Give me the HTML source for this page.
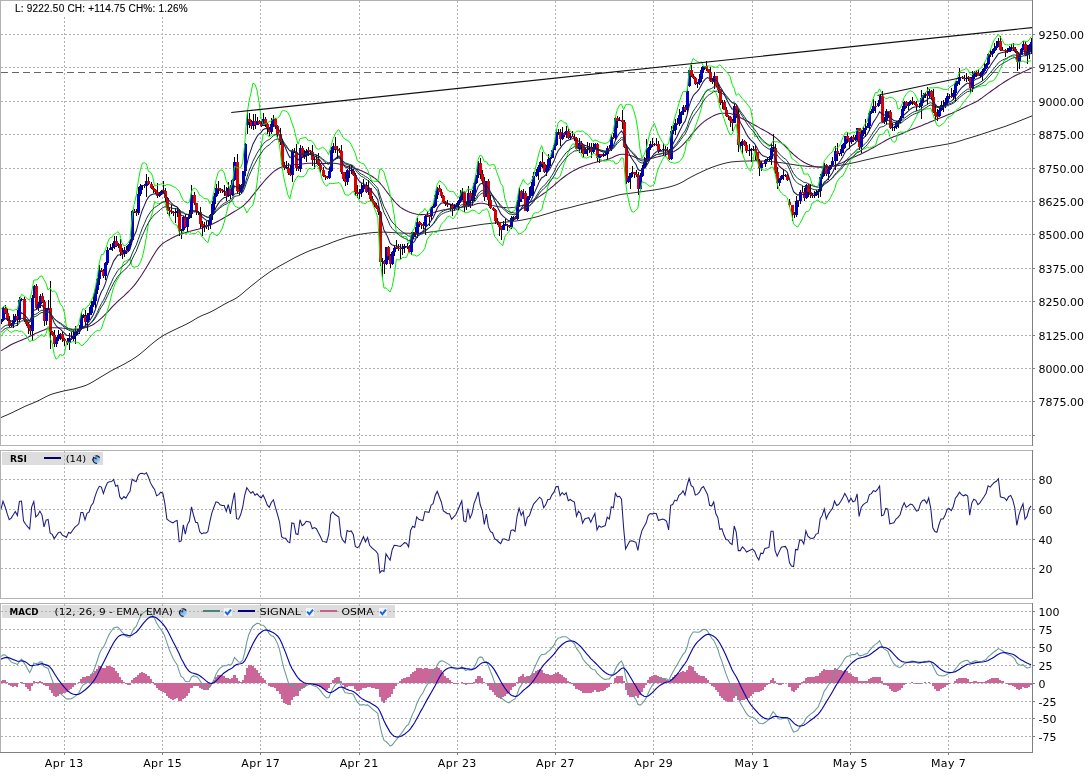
<!DOCTYPE html>
<html><head><meta charset="utf-8"><title>Chart</title>
<style>
html,body{margin:0;padding:0;background:#fff;}
.w{stroke:#000;stroke-width:1;fill:none}.u{fill:#0000cc}.d{fill:#dd0000}
body{width:1092px;height:777px;position:relative;overflow:hidden;font-family:"Liberation Sans",Arial,sans-serif;}
.top{position:absolute;left:9px;top:3px;height:13px;line-height:13px;padding:0 5px;background:#fff;font-size:10px;letter-spacing:0.26px;will-change:transform;color:#000;white-space:nowrap;}
.leg{will-change:transform;position:absolute;left:2px;height:13px;background:#ddd;font-family:"DejaVu Sans",Verdana,sans-serif;font-size:10px;line-height:13px;color:#000;white-space:nowrap;}
.leg span{position:absolute;top:0;}
.leg b{position:absolute;top:0;font-weight:bold;}
.leg i{position:absolute;display:block;height:2px;top:5px;}
.ico{position:absolute;top:2px;width:9px;height:9px;border-radius:50%;background:radial-gradient(circle at 35% 35%,#cfe4f7 0,#6fa3d0 45%,#2d5f8f 100%);}
.chk{position:absolute;top:2px;width:9px;height:9px;background:#eef3f8;}
.chk svg{position:absolute;left:0;top:0}
</style></head><body>
<svg width="1092" height="777" viewBox="0 0 1092 777" style="position:absolute;left:0;top:0;will-change:transform">
<defs><clipPath id="c1"><rect x="1" y="1" width="1031" height="444"/></clipPath><clipPath id="c2"><rect x="1" y="451" width="1031" height="147"/></clipPath><clipPath id="c3"><rect x="1" y="604" width="1031" height="148"/></clipPath></defs>
<rect x="2" y="452" width="101" height="13" fill="#dddddd"/><rect x="2" y="605" width="393" height="13" fill="#dddddd"/>
<path d="M1 34.5H1032 M1 67.5H1032 M1 101.5H1032 M1 134.5H1032 M1 168.5H1032 M1 201.5H1032 M1 234.5H1032 M1 268.5H1032 M1 301.5H1032 M1 335.5H1032 M1 368.5H1032 M1 401.5H1032 M1 435.5H1032 M64.5 1V445 M162.5 1V445 M260.5 1V445 M359.5 1V445 M457.5 1V445 M555.5 1V445 M653.5 1V445 M752.5 1V445 M850.5 1V445 M948.5 1V445 M1 479.5H1032 M1 509.5H1032 M1 539.5H1032 M1 568.5H1032 M64.5 451V598 M162.5 451V598 M260.5 451V598 M359.5 451V598 M457.5 451V598 M555.5 451V598 M653.5 451V598 M752.5 451V598 M850.5 451V598 M948.5 451V598 M1 611.5H1032 M1 629.5H1032 M1 647.5H1032 M1 665.5H1032 M1 683.5H1032 M1 701.5H1032 M1 718.5H1032 M1 736.5H1032 M64.5 604V752 M162.5 604V752 M260.5 604V752 M359.5 604V752 M457.5 604V752 M555.5 604V752 M653.5 604V752 M752.5 604V752 M850.5 604V752 M948.5 604V752" stroke="#b2b2b2" stroke-width="1" stroke-dasharray="2 2" fill="none" shape-rendering="crispEdges"/>
<path d="M1 72.5H1032" stroke="#666" stroke-width="1" stroke-dasharray="7 4" fill="none" shape-rendering="crispEdges"/>
<g clip-path="url(#c1)">
<g shape-rendering="crispEdges"><path class="w" d="M1.5 319V324"/><path class="u" d="M0 320h3V322h-3z"/><path class="w" d="M3.5 307V321"/><path class="u" d="M2 308h3V320h-3z"/><path class="w" d="M5.5 305V314"/><path class="d" d="M4 308h3V313h-3z"/><path class="w" d="M7.5 309V321"/><path class="d" d="M6 313h3V320h-3z"/><path class="w" d="M9.5 316V327"/><path class="d" d="M8 320h3V326h-3z"/><path class="w" d="M11.5 323V327"/><path class="u" d="M10 324h3V326h-3z"/><path class="w" d="M13.5 314V328"/><path class="u" d="M12 320h3V324h-3z"/><path class="w" d="M15.5 314V322"/><path class="u" d="M14 316h3V320h-3z"/><path class="w" d="M17.5 310V326"/><path class="d" d="M16 316h3V320h-3z"/><path class="w" d="M19.5 297V322"/><path class="u" d="M18 300h3V320h-3z"/><path class="w" d="M21.5 298V301"/><path class="u" d="M20 299h3V300h-3z"/><path class="w" d="M24.5 297V322"/><path class="d" d="M23 299h3V320h-3z"/><path class="w" d="M26.5 319V326"/><path class="d" d="M25 320h3V324h-3z"/><path class="w" d="M28.5 322V334"/><path class="d" d="M27 324h3V328h-3z"/><path class="w" d="M30.5 325V335"/><path class="d" d="M29 328h3V331h-3z"/><path class="w" d="M32.5 295V341"/><path class="u" d="M31 298h3V331h-3z"/><path class="w" d="M34.5 285V298"/><path class="u" d="M33 286h3V298h-3z"/><path class="w" d="M36.5 284V309"/><path class="d" d="M35 286h3V308h-3z"/><path class="w" d="M38.5 302V311"/><path class="u" d="M37 304h3V308h-3z"/><path class="w" d="M40.5 294V308"/><path class="u" d="M39 296h3V304h-3z"/><path class="w" d="M42.5 293V303"/><path class="d" d="M41 296h3V302h-3z"/><path class="w" d="M44.5 300V326"/><path class="d" d="M43 302h3V321h-3z"/><path class="w" d="M46.5 308V325"/><path class="u" d="M45 309h3V321h-3z"/><path class="w" d="M48.5 300V310"/><path class="u" d="M47 308h3V309h-3z"/><path class="w" d="M50.5 281V349"/><path class="d" d="M49 308h3V332h-3z"/><path class="w" d="M52.5 331V336"/><path class="d" d="M51 332h3V335h-3z"/><path class="w" d="M54.5 330V347"/><path class="d" d="M53 335h3V344h-3z"/><path class="w" d="M56.5 337V347"/><path class="u" d="M55 339h3V344h-3z"/><path class="w" d="M58.5 330V341"/><path class="u" d="M57 335h3V339h-3z"/><path class="w" d="M60.5 333V340"/><path class="u" d="M59 334h3V335h-3z"/><path class="w" d="M62.5 332V342"/><path class="d" d="M61 334h3V339h-3z"/><path class="w" d="M64.5 338V346"/><path class="d" d="M63 339h3V341h-3z"/><path class="w" d="M67.5 338V345"/><path class="d" d="M66 341h3V343h-3z"/><path class="w" d="M69.5 333V350"/><path class="u" d="M68 338h3V343h-3z"/><path class="w" d="M71.5 332V340"/><path class="d" d="M70 338h3V339h-3z"/><path class="w" d="M73.5 330V341"/><path class="u" d="M72 336h3V339h-3z"/><path class="w" d="M75.5 326V344"/><path class="u" d="M74 332h3V336h-3z"/><path class="w" d="M77.5 329V335"/><path class="u" d="M76 331h3V332h-3z"/><path class="w" d="M79.5 325V334"/><path class="u" d="M78 329h3V331h-3z"/><path class="w" d="M81.5 312V330"/><path class="u" d="M80 316h3V329h-3z"/><path class="w" d="M83.5 314V318"/><path class="u" d="M82 315h3V316h-3z"/><path class="w" d="M85.5 310V325"/><path class="d" d="M84 316h3V322h-3z"/><path class="w" d="M87.5 313V331"/><path class="u" d="M86 315h3V322h-3z"/><path class="w" d="M89.5 307V320"/><path class="u" d="M88 313h3V315h-3z"/><path class="w" d="M91.5 301V315"/><path class="u" d="M90 305h3V313h-3z"/><path class="w" d="M93.5 294V307"/><path class="u" d="M92 301h3V305h-3z"/><path class="w" d="M95.5 287V308"/><path class="u" d="M94 290h3V301h-3z"/><path class="w" d="M97.5 278V294"/><path class="u" d="M96 279h3V290h-3z"/><path class="w" d="M99.5 265V285"/><path class="u" d="M98 270h3V279h-3z"/><path class="w" d="M101.5 268V272"/><path class="d" d="M100 270h3V271h-3z"/><path class="w" d="M103.5 269V278"/><path class="d" d="M102 271h3V276h-3z"/><path class="w" d="M105.5 262V280"/><path class="u" d="M104 263h3V276h-3z"/><path class="w" d="M107.5 247V265"/><path class="u" d="M106 250h3V263h-3z"/><path class="w" d="M110.5 244V250"/><path class="u" d="M109 248h3V250h-3z"/><path class="w" d="M112.5 243V251"/><path class="u" d="M111 247h3V248h-3z"/><path class="w" d="M114.5 236V249"/><path class="u" d="M113 241h3V247h-3z"/><path class="w" d="M116.5 236V247"/><path class="d" d="M115 241h3V246h-3z"/><path class="w" d="M118.5 243V248"/><path class="u" d="M117 244h3V246h-3z"/><path class="w" d="M120.5 239V256"/><path class="d" d="M119 244h3V252h-3z"/><path class="w" d="M122.5 248V259"/><path class="d" d="M121 252h3V254h-3z"/><path class="w" d="M124.5 247V257"/><path class="u" d="M123 250h3V254h-3z"/><path class="w" d="M126.5 246V254"/><path class="d" d="M125 250h3V251h-3z"/><path class="w" d="M128.5 244V252"/><path class="u" d="M127 245h3V251h-3z"/><path class="w" d="M130.5 239V247"/><path class="u" d="M129 240h3V245h-3z"/><path class="w" d="M132.5 210V241"/><path class="u" d="M131 211h3V240h-3z"/><path class="w" d="M134.5 209V213"/><path class="d" d="M133 211h3V212h-3z"/><path class="w" d="M136.5 209V216"/><path class="d" d="M135 212h3V213h-3z"/><path class="w" d="M138.5 187V215"/><path class="u" d="M137 194h3V213h-3z"/><path class="w" d="M140.5 184V196"/><path class="u" d="M139 186h3V194h-3z"/><path class="w" d="M142.5 185V190"/><path class="u" d="M141 185h3V186h-3z"/><path class="w" d="M144.5 184V188"/><path class="d" d="M143 185h3V186h-3z"/><path class="w" d="M146.5 174V197"/><path class="u" d="M145 181h3V186h-3z"/><path class="w" d="M148.5 177V185"/><path class="d" d="M147 181h3V184h-3z"/><path class="w" d="M151.5 182V189"/><path class="d" d="M150 184h3V188h-3z"/><path class="w" d="M153.5 186V193"/><path class="d" d="M152 188h3V190h-3z"/><path class="w" d="M155.5 189V194"/><path class="d" d="M154 190h3V192h-3z"/><path class="w" d="M157.5 183V198"/><path class="d" d="M156 192h3V196h-3z"/><path class="w" d="M159.5 192V197"/><path class="u" d="M158 194h3V196h-3z"/><path class="w" d="M161.5 190V195"/><path class="u" d="M160 191h3V194h-3z"/><path class="w" d="M163.5 181V193"/><path class="d" d="M162 190h3V191h-3z"/><path class="w" d="M165.5 188V202"/><path class="d" d="M164 191h3V198h-3z"/><path class="w" d="M167.5 197V214"/><path class="d" d="M166 198h3V210h-3z"/><path class="w" d="M169.5 207V217"/><path class="d" d="M168 210h3V211h-3z"/><path class="w" d="M171.5 205V214"/><path class="d" d="M170 211h3V212h-3z"/><path class="w" d="M173.5 211V216"/><path class="d" d="M172 212h3V213h-3z"/><path class="w" d="M175.5 208V223"/><path class="u" d="M174 212h3V213h-3z"/><path class="w" d="M177.5 207V217"/><path class="u" d="M176 211h3V212h-3z"/><path class="w" d="M179.5 209V236"/><path class="d" d="M178 211h3V231h-3z"/><path class="w" d="M181.5 229V239"/><path class="u" d="M180 230h3V231h-3z"/><path class="w" d="M183.5 216V231"/><path class="u" d="M182 217h3V230h-3z"/><path class="w" d="M185.5 214V228"/><path class="d" d="M184 217h3V227h-3z"/><path class="w" d="M187.5 217V232"/><path class="u" d="M186 218h3V227h-3z"/><path class="w" d="M189.5 210V219"/><path class="u" d="M188 214h3V218h-3z"/><path class="w" d="M191.5 185V218"/><path class="u" d="M190 195h3V214h-3z"/><path class="w" d="M194.5 192V205"/><path class="d" d="M193 195h3V203h-3z"/><path class="w" d="M196.5 203V215"/><path class="d" d="M195 203h3V212h-3z"/><path class="w" d="M198.5 211V215"/><path class="d" d="M197 212h3V213h-3z"/><path class="w" d="M200.5 207V229"/><path class="d" d="M199 212h3V224h-3z"/><path class="w" d="M202.5 221V236"/><path class="d" d="M201 224h3V227h-3z"/><path class="w" d="M204.5 222V232"/><path class="u" d="M203 226h3V227h-3z"/><path class="w" d="M206.5 221V229"/><path class="d" d="M205 225h3V226h-3z"/><path class="w" d="M208.5 220V230"/><path class="u" d="M207 225h3V226h-3z"/><path class="w" d="M210.5 214V229"/><path class="u" d="M209 215h3V225h-3z"/><path class="w" d="M212.5 201V220"/><path class="u" d="M211 204h3V215h-3z"/><path class="w" d="M214.5 193V210"/><path class="u" d="M213 196h3V204h-3z"/><path class="w" d="M216.5 184V197"/><path class="u" d="M215 188h3V196h-3z"/><path class="w" d="M218.5 181V194"/><path class="d" d="M217 188h3V189h-3z"/><path class="w" d="M220.5 188V193"/><path class="d" d="M219 189h3V191h-3z"/><path class="w" d="M222.5 189V193"/><path class="d" d="M221 190h3V191h-3z"/><path class="w" d="M224.5 185V196"/><path class="u" d="M223 191h3V192h-3z"/><path class="w" d="M226.5 187V201"/><path class="d" d="M225 191h3V196h-3z"/><path class="w" d="M228.5 182V197"/><path class="u" d="M227 188h3V196h-3z"/><path class="w" d="M230.5 185V199"/><path class="d" d="M229 188h3V195h-3z"/><path class="w" d="M232.5 179V196"/><path class="u" d="M231 180h3V195h-3z"/><path class="w" d="M234.5 157V181"/><path class="u" d="M233 162h3V180h-3z"/><path class="w" d="M237.5 154V193"/><path class="d" d="M236 162h3V191h-3z"/><path class="w" d="M239.5 184V195"/><path class="d" d="M238 191h3V192h-3z"/><path class="w" d="M241.5 184V194"/><path class="u" d="M240 185h3V192h-3z"/><path class="w" d="M243.5 171V188"/><path class="u" d="M242 171h3V185h-3z"/><path class="w" d="M245.5 143V176"/><path class="u" d="M244 144h3V171h-3z"/><path class="w" d="M247.5 110V134"/><path class="u" d="M246 119h3V125h-3z"/><path class="w" d="M249.5 113V128"/><path class="d" d="M248 119h3V122h-3z"/><path class="w" d="M251.5 120V129"/><path class="d" d="M250 122h3V126h-3z"/><path class="w" d="M253.5 114V130"/><path class="u" d="M252 121h3V126h-3z"/><path class="w" d="M255.5 114V129"/><path class="d" d="M254 121h3V125h-3z"/><path class="w" d="M257.5 117V125"/><path class="u" d="M256 121h3V125h-3z"/><path class="w" d="M259.5 120V124"/><path class="d" d="M258 121h3V124h-3z"/><path class="w" d="M261.5 121V127"/><path class="d" d="M260 124h3V126h-3z"/><path class="w" d="M263.5 113V126"/><path class="u" d="M262 119h3V126h-3z"/><path class="w" d="M265.5 117V127"/><path class="d" d="M264 119h3V124h-3z"/><path class="w" d="M267.5 123V134"/><path class="d" d="M266 124h3V129h-3z"/><path class="w" d="M269.5 127V136"/><path class="d" d="M268 129h3V132h-3z"/><path class="w" d="M271.5 118V134"/><path class="u" d="M270 124h3V132h-3z"/><path class="w" d="M273.5 115V127"/><path class="u" d="M272 119h3V124h-3z"/><path class="w" d="M275.5 118V129"/><path class="d" d="M274 119h3V126h-3z"/><path class="w" d="M277.5 125V138"/><path class="d" d="M276 126h3V134h-3z"/><path class="w" d="M280.5 128V145"/><path class="d" d="M279 134h3V142h-3z"/><path class="w" d="M282.5 139V167"/><path class="d" d="M281 142h3V165h-3z"/><path class="w" d="M284.5 162V170"/><path class="d" d="M283 165h3V168h-3z"/><path class="w" d="M286.5 161V169"/><path class="u" d="M285 167h3V168h-3z"/><path class="w" d="M288.5 163V175"/><path class="d" d="M287 168h3V173h-3z"/><path class="w" d="M290.5 165V176"/><path class="d" d="M289 173h3V175h-3z"/><path class="w" d="M292.5 149V182"/><path class="u" d="M291 151h3V175h-3z"/><path class="w" d="M294.5 148V153"/><path class="d" d="M293 151h3V152h-3z"/><path class="w" d="M296.5 144V171"/><path class="d" d="M295 152h3V168h-3z"/><path class="w" d="M298.5 166V171"/><path class="d" d="M297 168h3V169h-3z"/><path class="w" d="M300.5 145V172"/><path class="u" d="M299 148h3V169h-3z"/><path class="w" d="M302.5 146V158"/><path class="d" d="M301 148h3V157h-3z"/><path class="w" d="M304.5 150V159"/><path class="u" d="M303 155h3V157h-3z"/><path class="w" d="M306.5 149V162"/><path class="u" d="M305 151h3V155h-3z"/><path class="w" d="M308.5 147V156"/><path class="d" d="M307 150h3V151h-3z"/><path class="w" d="M310.5 150V154"/><path class="d" d="M309 151h3V152h-3z"/><path class="w" d="M312.5 145V166"/><path class="d" d="M311 152h3V160h-3z"/><path class="w" d="M314.5 157V169"/><path class="u" d="M313 159h3V160h-3z"/><path class="w" d="M316.5 155V163"/><path class="d" d="M315 159h3V160h-3z"/><path class="w" d="M318.5 153V166"/><path class="d" d="M317 160h3V165h-3z"/><path class="w" d="M320.5 163V173"/><path class="d" d="M319 165h3V170h-3z"/><path class="w" d="M323.5 167V177"/><path class="d" d="M322 170h3V176h-3z"/><path class="w" d="M325.5 175V180"/><path class="d" d="M324 176h3V177h-3z"/><path class="w" d="M327.5 176V179"/><path class="d" d="M326 177h3V178h-3z"/><path class="w" d="M329.5 167V179"/><path class="u" d="M328 171h3V178h-3z"/><path class="w" d="M331.5 147V172"/><path class="u" d="M330 150h3V171h-3z"/><path class="w" d="M333.5 143V153"/><path class="u" d="M332 146h3V150h-3z"/><path class="w" d="M335.5 137V153"/><path class="d" d="M334 146h3V149h-3z"/><path class="w" d="M337.5 146V159"/><path class="d" d="M336 149h3V150h-3z"/><path class="w" d="M339.5 148V153"/><path class="d" d="M338 150h3V151h-3z"/><path class="w" d="M341.5 145V174"/><path class="d" d="M340 151h3V172h-3z"/><path class="w" d="M343.5 172V181"/><path class="d" d="M342 172h3V179h-3z"/><path class="w" d="M345.5 172V186"/><path class="d" d="M344 179h3V182h-3z"/><path class="w" d="M347.5 169V185"/><path class="u" d="M346 170h3V182h-3z"/><path class="w" d="M349.5 165V178"/><path class="d" d="M348 170h3V171h-3z"/><path class="w" d="M351.5 165V174"/><path class="u" d="M350 170h3V171h-3z"/><path class="w" d="M353.5 169V176"/><path class="d" d="M352 171h3V175h-3z"/><path class="w" d="M355.5 173V196"/><path class="d" d="M354 175h3V192h-3z"/><path class="w" d="M357.5 185V198"/><path class="d" d="M356 192h3V194h-3z"/><path class="w" d="M359.5 189V199"/><path class="u" d="M358 193h3V194h-3z"/><path class="w" d="M361.5 183V197"/><path class="u" d="M360 189h3V193h-3z"/><path class="w" d="M363.5 179V192"/><path class="u" d="M362 185h3V189h-3z"/><path class="w" d="M366.5 182V193"/><path class="d" d="M365 185h3V192h-3z"/><path class="w" d="M368.5 180V195"/><path class="u" d="M367 188h3V192h-3z"/><path class="w" d="M370.5 188V201"/><path class="d" d="M369 188h3V199h-3z"/><path class="w" d="M372.5 196V203"/><path class="d" d="M371 199h3V202h-3z"/><path class="w" d="M374.5 201V207"/><path class="d" d="M373 202h3V205h-3z"/><path class="w" d="M376.5 203V209"/><path class="d" d="M375 205h3V208h-3z"/><path class="w" d="M378.5 206V215"/><path class="d" d="M377 208h3V212h-3z"/><path class="w" d="M380.5 211V266"/><path class="d" d="M379 212h3V262h-3z"/><path class="w" d="M382.5 258V278"/><path class="u" d="M381 261h3V262h-3z"/><path class="w" d="M384.5 260V274"/><path class="d" d="M383 261h3V264h-3z"/><path class="w" d="M386.5 247V265"/><path class="u" d="M385 247h3V264h-3z"/><path class="w" d="M388.5 246V260"/><path class="d" d="M387 247h3V256h-3z"/><path class="w" d="M390.5 254V268"/><path class="d" d="M389 256h3V264h-3z"/><path class="w" d="M392.5 251V265"/><path class="u" d="M391 252h3V264h-3z"/><path class="w" d="M394.5 246V256"/><path class="u" d="M393 248h3V252h-3z"/><path class="w" d="M396.5 240V249"/><path class="d" d="M395 247h3V248h-3z"/><path class="w" d="M398.5 244V251"/><path class="d" d="M397 248h3V249h-3z"/><path class="w" d="M400.5 244V259"/><path class="d" d="M399 248h3V249h-3z"/><path class="w" d="M402.5 244V255"/><path class="u" d="M401 248h3V249h-3z"/><path class="w" d="M404.5 244V253"/><path class="u" d="M403 246h3V248h-3z"/><path class="w" d="M407.5 243V249"/><path class="d" d="M406 246h3V247h-3z"/><path class="w" d="M409.5 245V253"/><path class="d" d="M408 247h3V252h-3z"/><path class="w" d="M411.5 232V255"/><path class="u" d="M410 237h3V252h-3z"/><path class="w" d="M413.5 232V239"/><path class="u" d="M412 232h3V237h-3z"/><path class="w" d="M415.5 227V237"/><path class="d" d="M414 232h3V234h-3z"/><path class="w" d="M417.5 218V238"/><path class="u" d="M416 222h3V234h-3z"/><path class="w" d="M419.5 221V227"/><path class="d" d="M418 222h3V224h-3z"/><path class="w" d="M421.5 223V229"/><path class="d" d="M420 224h3V225h-3z"/><path class="w" d="M423.5 222V229"/><path class="d" d="M422 225h3V226h-3z"/><path class="w" d="M425.5 215V235"/><path class="u" d="M424 216h3V226h-3z"/><path class="w" d="M427.5 211V217"/><path class="d" d="M426 215h3V216h-3z"/><path class="w" d="M429.5 215V226"/><path class="d" d="M428 216h3V217h-3z"/><path class="w" d="M431.5 207V220"/><path class="u" d="M430 208h3V216h-3z"/><path class="w" d="M433.5 203V208"/><path class="u" d="M432 206h3V208h-3z"/><path class="w" d="M435.5 191V207"/><path class="u" d="M434 195h3V206h-3z"/><path class="w" d="M437.5 187V199"/><path class="u" d="M436 188h3V195h-3z"/><path class="w" d="M439.5 185V192"/><path class="d" d="M438 188h3V192h-3z"/><path class="w" d="M441.5 189V198"/><path class="d" d="M440 192h3V196h-3z"/><path class="w" d="M443.5 195V203"/><path class="d" d="M442 196h3V202h-3z"/><path class="w" d="M445.5 201V206"/><path class="d" d="M444 202h3V204h-3z"/><path class="w" d="M447.5 200V207"/><path class="d" d="M446 204h3V205h-3z"/><path class="w" d="M450.5 204V211"/><path class="u" d="M449 204h3V205h-3z"/><path class="w" d="M452.5 203V216"/><path class="d" d="M451 205h3V209h-3z"/><path class="w" d="M454.5 204V211"/><path class="u" d="M453 207h3V209h-3z"/><path class="w" d="M456.5 203V207"/><path class="u" d="M455 205h3V207h-3z"/><path class="w" d="M458.5 200V210"/><path class="u" d="M457 201h3V205h-3z"/><path class="w" d="M460.5 190V203"/><path class="u" d="M459 197h3V201h-3z"/><path class="w" d="M462.5 188V200"/><path class="u" d="M461 192h3V197h-3z"/><path class="w" d="M464.5 191V212"/><path class="d" d="M463 192h3V206h-3z"/><path class="w" d="M466.5 202V210"/><path class="d" d="M465 205h3V206h-3z"/><path class="w" d="M468.5 186V207"/><path class="u" d="M467 193h3V206h-3z"/><path class="w" d="M470.5 191V208"/><path class="d" d="M469 193h3V201h-3z"/><path class="w" d="M472.5 190V205"/><path class="u" d="M471 196h3V201h-3z"/><path class="w" d="M474.5 181V201"/><path class="u" d="M473 183h3V196h-3z"/><path class="w" d="M476.5 175V184"/><path class="u" d="M475 175h3V183h-3z"/><path class="w" d="M478.5 161V178"/><path class="u" d="M477 163h3V175h-3z"/><path class="w" d="M480.5 158V179"/><path class="d" d="M479 163h3V174h-3z"/><path class="w" d="M482.5 170V183"/><path class="d" d="M481 174h3V181h-3z"/><path class="w" d="M484.5 177V201"/><path class="d" d="M483 181h3V197h-3z"/><path class="w" d="M486.5 181V197"/><path class="u" d="M485 181h3V197h-3z"/><path class="w" d="M488.5 179V206"/><path class="d" d="M487 181h3V200h-3z"/><path class="w" d="M490.5 195V209"/><path class="d" d="M489 200h3V208h-3z"/><path class="w" d="M493.5 207V211"/><path class="d" d="M492 208h3V210h-3z"/><path class="w" d="M495.5 209V224"/><path class="d" d="M494 210h3V221h-3z"/><path class="w" d="M497.5 218V225"/><path class="d" d="M496 221h3V223h-3z"/><path class="w" d="M499.5 223V236"/><path class="d" d="M498 223h3V227h-3z"/><path class="w" d="M501.5 226V240"/><path class="d" d="M500 227h3V230h-3z"/><path class="w" d="M503.5 221V230"/><path class="u" d="M502 225h3V230h-3z"/><path class="w" d="M505.5 219V226"/><path class="u" d="M504 224h3V226h-3z"/><path class="w" d="M507.5 224V231"/><path class="d" d="M506 225h3V226h-3z"/><path class="w" d="M509.5 225V228"/><path class="d" d="M508 226h3V227h-3z"/><path class="w" d="M511.5 216V229"/><path class="u" d="M510 218h3V227h-3z"/><path class="w" d="M513.5 216V221"/><path class="u" d="M512 217h3V218h-3z"/><path class="w" d="M515.5 216V219"/><path class="d" d="M514 217h3V219h-3z"/><path class="w" d="M517.5 200V220"/><path class="u" d="M516 202h3V219h-3z"/><path class="w" d="M519.5 188V207"/><path class="u" d="M518 191h3V202h-3z"/><path class="w" d="M521.5 190V202"/><path class="d" d="M520 191h3V199h-3z"/><path class="w" d="M523.5 189V199"/><path class="u" d="M522 193h3V199h-3z"/><path class="w" d="M525.5 191V211"/><path class="d" d="M524 193h3V211h-3z"/><path class="w" d="M527.5 196V212"/><path class="u" d="M526 198h3V211h-3z"/><path class="w" d="M529.5 187V200"/><path class="u" d="M528 196h3V198h-3z"/><path class="w" d="M531.5 182V196"/><path class="u" d="M530 186h3V196h-3z"/><path class="w" d="M533.5 172V195"/><path class="u" d="M532 176h3V186h-3z"/><path class="w" d="M536.5 169V177"/><path class="u" d="M535 172h3V176h-3z"/><path class="w" d="M538.5 165V180"/><path class="u" d="M537 167h3V172h-3z"/><path class="w" d="M540.5 161V172"/><path class="u" d="M539 162h3V167h-3z"/><path class="w" d="M542.5 152V168"/><path class="d" d="M541 162h3V164h-3z"/><path class="w" d="M544.5 162V173"/><path class="d" d="M543 164h3V172h-3z"/><path class="w" d="M546.5 165V176"/><path class="u" d="M545 168h3V172h-3z"/><path class="w" d="M548.5 154V171"/><path class="u" d="M547 159h3V168h-3z"/><path class="w" d="M550.5 157V166"/><path class="u" d="M549 158h3V159h-3z"/><path class="w" d="M552.5 149V158"/><path class="u" d="M551 150h3V158h-3z"/><path class="w" d="M554.5 141V150"/><path class="u" d="M553 145h3V150h-3z"/><path class="w" d="M556.5 129V146"/><path class="u" d="M555 132h3V145h-3z"/><path class="w" d="M558.5 129V135"/><path class="u" d="M557 132h3V133h-3z"/><path class="w" d="M560.5 129V146"/><path class="d" d="M559 132h3V139h-3z"/><path class="w" d="M562.5 127V140"/><path class="u" d="M561 133h3V139h-3z"/><path class="w" d="M564.5 132V137"/><path class="d" d="M563 133h3V135h-3z"/><path class="w" d="M566.5 126V138"/><path class="u" d="M565 131h3V135h-3z"/><path class="w" d="M568.5 129V139"/><path class="d" d="M567 131h3V138h-3z"/><path class="w" d="M570.5 133V140"/><path class="u" d="M569 136h3V138h-3z"/><path class="w" d="M572.5 131V137"/><path class="d" d="M571 136h3V137h-3z"/><path class="w" d="M574.5 134V141"/><path class="d" d="M573 137h3V138h-3z"/><path class="w" d="M576.5 137V150"/><path class="d" d="M575 138h3V149h-3z"/><path class="w" d="M579.5 138V153"/><path class="u" d="M578 143h3V149h-3z"/><path class="w" d="M581.5 141V153"/><path class="d" d="M580 143h3V145h-3z"/><path class="w" d="M583.5 145V157"/><path class="d" d="M582 145h3V154h-3z"/><path class="w" d="M585.5 147V154"/><path class="u" d="M584 149h3V154h-3z"/><path class="w" d="M587.5 142V156"/><path class="u" d="M586 149h3V150h-3z"/><path class="w" d="M589.5 143V153"/><path class="u" d="M588 148h3V149h-3z"/><path class="w" d="M591.5 143V158"/><path class="d" d="M590 148h3V152h-3z"/><path class="w" d="M593.5 143V154"/><path class="u" d="M592 148h3V152h-3z"/><path class="w" d="M595.5 143V149"/><path class="u" d="M594 144h3V148h-3z"/><path class="w" d="M597.5 143V162"/><path class="d" d="M596 144h3V158h-3z"/><path class="w" d="M599.5 154V163"/><path class="u" d="M598 154h3V158h-3z"/><path class="w" d="M601.5 154V157"/><path class="d" d="M600 154h3V156h-3z"/><path class="w" d="M603.5 153V157"/><path class="u" d="M602 155h3V156h-3z"/><path class="w" d="M605.5 151V156"/><path class="u" d="M604 154h3V155h-3z"/><path class="w" d="M607.5 146V160"/><path class="u" d="M606 148h3V154h-3z"/><path class="w" d="M609.5 145V149"/><path class="d" d="M608 148h3V149h-3z"/><path class="w" d="M611.5 135V151"/><path class="u" d="M610 137h3V149h-3z"/><path class="w" d="M613.5 133V139"/><path class="d" d="M612 137h3V138h-3z"/><path class="w" d="M615.5 117V140"/><path class="u" d="M614 118h3V138h-3z"/><path class="w" d="M617.5 116V128"/><path class="d" d="M616 118h3V121h-3z"/><path class="w" d="M619.5 117V121"/><path class="u" d="M618 120h3V121h-3z"/><path class="w" d="M622.5 110V129"/><path class="d" d="M621 120h3V122h-3z"/><path class="w" d="M624.5 120V148"/><path class="d" d="M623 122h3V147h-3z"/><path class="w" d="M626.5 146V184"/><path class="d" d="M625 147h3V182h-3z"/><path class="w" d="M628.5 176V183"/><path class="u" d="M627 178h3V182h-3z"/><path class="w" d="M630.5 173V189"/><path class="u" d="M629 173h3V178h-3z"/><path class="w" d="M632.5 166V177"/><path class="u" d="M631 172h3V173h-3z"/><path class="w" d="M634.5 172V178"/><path class="d" d="M633 172h3V174h-3z"/><path class="w" d="M636.5 170V177"/><path class="d" d="M635 174h3V175h-3z"/><path class="w" d="M638.5 172V195"/><path class="d" d="M637 175h3V189h-3z"/><path class="w" d="M640.5 173V191"/><path class="u" d="M639 176h3V189h-3z"/><path class="w" d="M642.5 165V177"/><path class="u" d="M641 168h3V176h-3z"/><path class="w" d="M644.5 157V168"/><path class="u" d="M643 162h3V168h-3z"/><path class="w" d="M646.5 139V165"/><path class="u" d="M645 158h3V162h-3z"/><path class="w" d="M648.5 147V161"/><path class="u" d="M647 148h3V158h-3z"/><path class="w" d="M650.5 141V150"/><path class="u" d="M649 144h3V148h-3z"/><path class="w" d="M652.5 138V147"/><path class="d" d="M651 144h3V145h-3z"/><path class="w" d="M654.5 143V146"/><path class="u" d="M653 144h3V145h-3z"/><path class="w" d="M656.5 138V146"/><path class="d" d="M655 144h3V145h-3z"/><path class="w" d="M658.5 141V153"/><path class="d" d="M657 144h3V151h-3z"/><path class="w" d="M660.5 149V151"/><path class="u" d="M659 150h3V151h-3z"/><path class="w" d="M663.5 143V155"/><path class="u" d="M662 149h3V150h-3z"/><path class="w" d="M665.5 146V156"/><path class="d" d="M664 149h3V150h-3z"/><path class="w" d="M667.5 147V152"/><path class="d" d="M666 150h3V151h-3z"/><path class="w" d="M669.5 149V160"/><path class="d" d="M668 151h3V159h-3z"/><path class="w" d="M671.5 126V160"/><path class="u" d="M670 131h3V159h-3z"/><path class="w" d="M673.5 125V134"/><path class="u" d="M672 130h3V131h-3z"/><path class="w" d="M675.5 119V135"/><path class="u" d="M674 123h3V130h-3z"/><path class="w" d="M677.5 118V125"/><path class="d" d="M676 123h3V124h-3z"/><path class="w" d="M679.5 109V126"/><path class="u" d="M678 115h3V124h-3z"/><path class="w" d="M681.5 111V123"/><path class="u" d="M680 112h3V115h-3z"/><path class="w" d="M683.5 105V115"/><path class="u" d="M682 107h3V112h-3z"/><path class="w" d="M685.5 105V112"/><path class="d" d="M684 107h3V110h-3z"/><path class="w" d="M687.5 87V114"/><path class="u" d="M686 91h3V110h-3z"/><path class="w" d="M689.5 69V87"/><path class="u" d="M688 70h3V86h-3z"/><path class="w" d="M691.5 65V77"/><path class="d" d="M690 70h3V76h-3z"/><path class="w" d="M693.5 74V79"/><path class="d" d="M692 76h3V78h-3z"/><path class="w" d="M695.5 77V85"/><path class="d" d="M694 78h3V84h-3z"/><path class="w" d="M697.5 82V88"/><path class="u" d="M696 83h3V84h-3z"/><path class="w" d="M699.5 74V85"/><path class="u" d="M698 79h3V83h-3z"/><path class="w" d="M701.5 67V82"/><path class="u" d="M700 70h3V79h-3z"/><path class="w" d="M703.5 66V73"/><path class="u" d="M702 66h3V70h-3z"/><path class="w" d="M706.5 61V71"/><path class="d" d="M705 66h3V69h-3z"/><path class="w" d="M708.5 69V73"/><path class="d" d="M707 69h3V72h-3z"/><path class="w" d="M710.5 67V82"/><path class="d" d="M709 72h3V81h-3z"/><path class="w" d="M712.5 78V84"/><path class="d" d="M711 81h3V82h-3z"/><path class="w" d="M714.5 72V89"/><path class="u" d="M713 76h3V82h-3z"/><path class="w" d="M716.5 76V87"/><path class="d" d="M715 76h3V86h-3z"/><path class="w" d="M718.5 84V93"/><path class="d" d="M717 86h3V90h-3z"/><path class="w" d="M720.5 89V105"/><path class="d" d="M719 90h3V103h-3z"/><path class="w" d="M722.5 100V109"/><path class="u" d="M721 102h3V103h-3z"/><path class="w" d="M724.5 100V110"/><path class="d" d="M723 102h3V110h-3z"/><path class="w" d="M726.5 107V117"/><path class="d" d="M725 110h3V116h-3z"/><path class="w" d="M728.5 115V120"/><path class="d" d="M727 116h3V117h-3z"/><path class="w" d="M730.5 116V127"/><path class="d" d="M729 117h3V121h-3z"/><path class="w" d="M732.5 119V131"/><path class="d" d="M731 121h3V123h-3z"/><path class="w" d="M734.5 104V123"/><path class="u" d="M733 106h3V123h-3z"/><path class="w" d="M736.5 105V118"/><path class="d" d="M735 106h3V114h-3z"/><path class="w" d="M738.5 109V152"/><path class="d" d="M737 114h3V145h-3z"/><path class="w" d="M740.5 142V149"/><path class="u" d="M739 144h3V146h-3z"/><path class="w" d="M742.5 139V154"/><path class="u" d="M741 141h3V145h-3z"/><path class="w" d="M744.5 140V146"/><path class="d" d="M743 141h3V145h-3z"/><path class="w" d="M746.5 142V153"/><path class="d" d="M745 145h3V151h-3z"/><path class="w" d="M749.5 144V156"/><path class="u" d="M748 150h3V151h-3z"/><path class="w" d="M751.5 148V162"/><path class="u" d="M750 149h3V150h-3z"/><path class="w" d="M753.5 146V151"/><path class="u" d="M752 149h3V150h-3z"/><path class="w" d="M755.5 145V160"/><path class="d" d="M754 149h3V152h-3z"/><path class="w" d="M757.5 152V162"/><path class="d" d="M756 152h3V161h-3z"/><path class="w" d="M759.5 159V176"/><path class="d" d="M758 161h3V168h-3z"/><path class="w" d="M761.5 161V171"/><path class="u" d="M760 163h3V168h-3z"/><path class="w" d="M763.5 163V164"/><path class="d" d="M762 163h3V164h-3z"/><path class="w" d="M765.5 159V167"/><path class="u" d="M764 160h3V164h-3z"/><path class="w" d="M767.5 157V161"/><path class="u" d="M766 159h3V160h-3z"/><path class="w" d="M769.5 156V161"/><path class="u" d="M768 159h3V160h-3z"/><path class="w" d="M771.5 143V165"/><path class="u" d="M770 148h3V159h-3z"/><path class="w" d="M773.5 134V152"/><path class="u" d="M772 147h3V148h-3z"/><path class="w" d="M775.5 144V174"/><path class="d" d="M774 148h3V172h-3z"/><path class="w" d="M777.5 167V189"/><path class="d" d="M776 172h3V183h-3z"/><path class="w" d="M779.5 178V186"/><path class="u" d="M778 179h3V183h-3z"/><path class="w" d="M781.5 175V180"/><path class="u" d="M780 176h3V179h-3z"/><path class="w" d="M783.5 169V180"/><path class="u" d="M782 175h3V176h-3z"/><path class="w" d="M785.5 174V177"/><path class="u" d="M784 175h3V176h-3z"/><path class="w" d="M787.5 174V181"/><path class="d" d="M786 175h3V180h-3z"/><path class="w" d="M789.5 199V207"/><path class="d" d="M788 202h3V205h-3z"/><path class="w" d="M792.5 205V221"/><path class="d" d="M791 205h3V214h-3z"/><path class="w" d="M794.5 212V218"/><path class="d" d="M793 214h3V215h-3z"/><path class="w" d="M796.5 196V217"/><path class="u" d="M795 201h3V215h-3z"/><path class="w" d="M798.5 200V207"/><path class="d" d="M797 200h3V201h-3z"/><path class="w" d="M800.5 190V204"/><path class="u" d="M799 192h3V201h-3z"/><path class="w" d="M802.5 186V193"/><path class="d" d="M801 192h3V193h-3z"/><path class="w" d="M804.5 188V201"/><path class="d" d="M803 192h3V198h-3z"/><path class="w" d="M806.5 184V199"/><path class="u" d="M805 185h3V198h-3z"/><path class="w" d="M808.5 184V197"/><path class="d" d="M807 185h3V192h-3z"/><path class="w" d="M810.5 184V198"/><path class="d" d="M809 192h3V195h-3z"/><path class="w" d="M812.5 193V198"/><path class="d" d="M811 195h3V196h-3z"/><path class="w" d="M814.5 191V198"/><path class="u" d="M813 195h3V196h-3z"/><path class="w" d="M816.5 190V196"/><path class="u" d="M815 192h3V195h-3z"/><path class="w" d="M818.5 189V198"/><path class="u" d="M817 191h3V192h-3z"/><path class="w" d="M820.5 174V197"/><path class="u" d="M819 177h3V191h-3z"/><path class="w" d="M822.5 170V179"/><path class="u" d="M821 173h3V177h-3z"/><path class="w" d="M824.5 163V176"/><path class="u" d="M823 165h3V173h-3z"/><path class="w" d="M826.5 164V176"/><path class="d" d="M825 165h3V174h-3z"/><path class="w" d="M828.5 167V180"/><path class="u" d="M827 169h3V174h-3z"/><path class="w" d="M830.5 165V170"/><path class="u" d="M829 165h3V169h-3z"/><path class="w" d="M832.5 157V166"/><path class="u" d="M831 161h3V165h-3z"/><path class="w" d="M835.5 146V170"/><path class="u" d="M834 151h3V161h-3z"/><path class="w" d="M837.5 143V161"/><path class="d" d="M836 151h3V154h-3z"/><path class="w" d="M839.5 153V156"/><path class="u" d="M838 153h3V154h-3z"/><path class="w" d="M841.5 145V156"/><path class="u" d="M840 149h3V153h-3z"/><path class="w" d="M843.5 143V153"/><path class="u" d="M842 144h3V149h-3z"/><path class="w" d="M845.5 136V148"/><path class="u" d="M844 136h3V144h-3z"/><path class="w" d="M847.5 132V143"/><path class="d" d="M846 136h3V139h-3z"/><path class="w" d="M849.5 138V149"/><path class="d" d="M848 139h3V142h-3z"/><path class="w" d="M851.5 136V144"/><path class="u" d="M850 137h3V142h-3z"/><path class="w" d="M853.5 135V142"/><path class="d" d="M852 137h3V140h-3z"/><path class="w" d="M855.5 135V141"/><path class="u" d="M854 138h3V140h-3z"/><path class="w" d="M857.5 128V141"/><path class="u" d="M856 128h3V138h-3z"/><path class="w" d="M859.5 128V150"/><path class="d" d="M858 128h3V147h-3z"/><path class="w" d="M861.5 130V153"/><path class="u" d="M860 134h3V147h-3z"/><path class="w" d="M863.5 127V136"/><path class="u" d="M862 130h3V134h-3z"/><path class="w" d="M865.5 119V137"/><path class="u" d="M864 128h3V130h-3z"/><path class="w" d="M867.5 123V128"/><path class="u" d="M866 126h3V128h-3z"/><path class="w" d="M869.5 111V131"/><path class="u" d="M868 113h3V126h-3z"/><path class="w" d="M871.5 109V114"/><path class="u" d="M870 111h3V113h-3z"/><path class="w" d="M873.5 99V113"/><path class="u" d="M872 106h3V111h-3z"/><path class="w" d="M875.5 101V113"/><path class="d" d="M874 106h3V107h-3z"/><path class="w" d="M878.5 100V107"/><path class="u" d="M877 103h3V106h-3z"/><path class="w" d="M880.5 94V104"/><path class="u" d="M879 96h3V103h-3z"/><path class="w" d="M882.5 91V123"/><path class="d" d="M881 96h3V122h-3z"/><path class="w" d="M884.5 117V124"/><path class="u" d="M883 121h3V122h-3z"/><path class="w" d="M886.5 109V124"/><path class="u" d="M885 111h3V121h-3z"/><path class="w" d="M888.5 111V118"/><path class="d" d="M887 111h3V112h-3z"/><path class="w" d="M890.5 110V129"/><path class="d" d="M889 112h3V128h-3z"/><path class="w" d="M892.5 123V131"/><path class="u" d="M891 127h3V128h-3z"/><path class="w" d="M894.5 126V131"/><path class="u" d="M893 127h3V128h-3z"/><path class="w" d="M896.5 121V129"/><path class="u" d="M895 123h3V127h-3z"/><path class="w" d="M898.5 120V128"/><path class="u" d="M897 121h3V123h-3z"/><path class="w" d="M900.5 116V123"/><path class="u" d="M899 118h3V121h-3z"/><path class="w" d="M902.5 106V118"/><path class="u" d="M901 109h3V118h-3z"/><path class="w" d="M904.5 101V111"/><path class="u" d="M903 102h3V109h-3z"/><path class="w" d="M906.5 101V108"/><path class="d" d="M905 102h3V106h-3z"/><path class="w" d="M908.5 102V110"/><path class="u" d="M907 104h3V106h-3z"/><path class="w" d="M910.5 100V105"/><path class="u" d="M909 101h3V104h-3z"/><path class="w" d="M912.5 97V105"/><path class="d" d="M911 101h3V102h-3z"/><path class="w" d="M914.5 101V105"/><path class="d" d="M913 102h3V104h-3z"/><path class="w" d="M916.5 101V111"/><path class="d" d="M915 104h3V106h-3z"/><path class="w" d="M919.5 103V108"/><path class="u" d="M918 106h3V107h-3z"/><path class="w" d="M921.5 90V119"/><path class="u" d="M920 98h3V106h-3z"/><path class="w" d="M923.5 93V103"/><path class="u" d="M922 95h3V98h-3z"/><path class="w" d="M925.5 92V98"/><path class="u" d="M924 94h3V95h-3z"/><path class="w" d="M927.5 87V105"/><path class="d" d="M926 94h3V96h-3z"/><path class="w" d="M929.5 89V98"/><path class="u" d="M928 91h3V96h-3z"/><path class="w" d="M931.5 90V100"/><path class="d" d="M930 91h3V97h-3z"/><path class="w" d="M933.5 89V113"/><path class="d" d="M932 97h3V112h-3z"/><path class="w" d="M935.5 106V119"/><path class="d" d="M934 112h3V116h-3z"/><path class="w" d="M937.5 109V121"/><path class="d" d="M936 116h3V117h-3z"/><path class="w" d="M939.5 108V117"/><path class="u" d="M938 110h3V116h-3z"/><path class="w" d="M941.5 101V111"/><path class="u" d="M940 105h3V110h-3z"/><path class="w" d="M943.5 100V112"/><path class="u" d="M942 105h3V106h-3z"/><path class="w" d="M945.5 98V108"/><path class="u" d="M944 102h3V105h-3z"/><path class="w" d="M947.5 93V105"/><path class="u" d="M946 96h3V102h-3z"/><path class="w" d="M949.5 94V99"/><path class="u" d="M948 96h3V97h-3z"/><path class="w" d="M951.5 88V98"/><path class="d" d="M950 96h3V97h-3z"/><path class="w" d="M953.5 90V100"/><path class="u" d="M952 93h3V97h-3z"/><path class="w" d="M955.5 81V102"/><path class="u" d="M954 84h3V93h-3z"/><path class="w" d="M957.5 81V86"/><path class="u" d="M956 81h3V84h-3z"/><path class="w" d="M959.5 68V85"/><path class="u" d="M958 77h3V81h-3z"/><path class="w" d="M962.5 76V79"/><path class="d" d="M961 77h3V78h-3z"/><path class="w" d="M964.5 75V81"/><path class="d" d="M963 78h3V79h-3z"/><path class="w" d="M966.5 73V82"/><path class="u" d="M965 78h3V79h-3z"/><path class="w" d="M968.5 76V81"/><path class="d" d="M967 77h3V78h-3z"/><path class="w" d="M970.5 77V93"/><path class="d" d="M969 78h3V88h-3z"/><path class="w" d="M972.5 71V92"/><path class="u" d="M971 77h3V88h-3z"/><path class="w" d="M974.5 71V79"/><path class="u" d="M973 73h3V77h-3z"/><path class="w" d="M976.5 71V77"/><path class="d" d="M975 72h3V73h-3z"/><path class="w" d="M978.5 70V76"/><path class="d" d="M977 73h3V76h-3z"/><path class="w" d="M980.5 72V78"/><path class="u" d="M979 74h3V76h-3z"/><path class="w" d="M982.5 69V81"/><path class="u" d="M981 71h3V74h-3z"/><path class="w" d="M984.5 63V72"/><path class="u" d="M983 68h3V71h-3z"/><path class="w" d="M986.5 63V69"/><path class="u" d="M985 64h3V68h-3z"/><path class="w" d="M988.5 53V65"/><path class="u" d="M987 54h3V64h-3z"/><path class="w" d="M990.5 50V57"/><path class="d" d="M989 54h3V55h-3z"/><path class="w" d="M992.5 49V57"/><path class="u" d="M991 51h3V54h-3z"/><path class="w" d="M994.5 43V53"/><path class="u" d="M993 48h3V51h-3z"/><path class="w" d="M996.5 41V50"/><path class="u" d="M995 46h3V48h-3z"/><path class="w" d="M998.5 38V47"/><path class="u" d="M997 41h3V46h-3z"/><path class="w" d="M1000.5 36V51"/><path class="d" d="M999 41h3V50h-3z"/><path class="w" d="M1002.5 47V51"/><path class="d" d="M1001 50h3V51h-3z"/><path class="w" d="M1005.5 49V57"/><path class="d" d="M1004 50h3V51h-3z"/><path class="w" d="M1007.5 48V53"/><path class="d" d="M1006 51h3V52h-3z"/><path class="w" d="M1009.5 46V52"/><path class="u" d="M1008 48h3V52h-3z"/><path class="w" d="M1011.5 44V51"/><path class="u" d="M1010 47h3V48h-3z"/><path class="w" d="M1013.5 43V51"/><path class="d" d="M1012 47h3V49h-3z"/><path class="w" d="M1015.5 47V53"/><path class="d" d="M1014 49h3V52h-3z"/><path class="w" d="M1017.5 51V71"/><path class="d" d="M1016 52h3V62h-3z"/><path class="w" d="M1019.5 54V69"/><path class="u" d="M1018 55h3V62h-3z"/><path class="w" d="M1021.5 48V55"/><path class="u" d="M1020 49h3V55h-3z"/><path class="w" d="M1023.5 41V50"/><path class="u" d="M1022 44h3V49h-3z"/><path class="w" d="M1025.5 42V56"/><path class="d" d="M1024 44h3V55h-3z"/><path class="w" d="M1027.5 45V64"/><path class="u" d="M1026 52h3V55h-3z"/><path class="w" d="M1029.5 44V59"/><path class="u" d="M1028 45h3V52h-3z"/><path class="w" d="M1031.5 38V54"/><path class="u" d="M1030 42h3V45h-3z"/></g>
<polyline points="0.0,418.0 2.0,417.1 4.0,416.2 6.0,415.4 8.0,414.5 10.0,413.6 12.0,412.7 14.0,411.7 16.0,410.7 18.0,409.8 20.0,408.8 22.0,407.8 24.0,406.8 26.0,405.9 28.0,405.1 30.0,404.2 32.0,403.5 34.0,402.6 36.0,401.8 38.0,400.8 40.0,399.9 42.0,398.8 44.0,397.7 46.0,396.7 48.0,395.7 50.0,394.8 52.0,394.1 54.0,393.5 56.0,392.9 58.0,392.4 60.0,391.9 62.0,391.4 64.0,390.9 66.0,390.5 68.0,390.1 70.0,389.7 72.0,389.3 74.0,388.9 76.0,388.4 78.0,387.8 80.0,387.2 82.0,386.7 84.0,386.0 86.0,385.3 88.0,384.4 90.0,383.4 92.0,382.3 94.0,381.1 96.0,379.9 98.0,378.7 100.0,377.5 102.0,376.3 104.0,375.1 106.0,373.9 108.0,372.7 110.0,371.5 112.0,370.4 114.0,369.3 116.0,368.3 118.0,367.2 120.0,366.3 122.0,365.2 124.0,364.2 126.0,363.1 128.0,361.9 130.0,360.8 132.0,359.6 134.0,358.3 136.0,357.0 138.0,355.6 140.0,354.0 142.0,352.4 144.0,350.7 146.0,349.0 148.0,347.2 150.0,345.5 152.0,343.8 154.0,342.2 156.0,340.6 158.0,339.1 160.0,337.7 162.0,336.4 164.0,335.1 166.0,334.0 168.0,333.0 170.0,332.0 172.0,331.0 174.0,330.0 176.0,329.1 178.0,328.1 180.0,327.2 182.0,326.3 184.0,325.3 186.0,324.4 188.0,323.3 190.0,322.2 192.0,321.1 194.0,319.9 196.0,318.6 198.0,317.5 200.0,316.5 202.0,315.5 204.0,314.7 206.0,313.9 208.0,313.1 210.0,312.2 212.0,311.2 214.0,310.2 216.0,309.1 218.0,307.9 220.0,306.8 222.0,305.6 224.0,304.4 226.0,303.4 228.0,302.3 230.0,301.3 232.0,300.4 234.0,299.4 236.0,298.2 238.0,296.9 240.0,295.4 242.0,293.8 244.0,292.1 246.0,290.3 248.0,288.7 250.0,287.0 252.0,285.4 254.0,283.8 256.0,282.2 258.0,280.6 260.0,279.1 262.0,277.6 264.0,276.1 266.0,274.7 268.0,273.2 270.0,271.8 272.0,270.5 274.0,269.3 276.0,268.1 278.0,266.9 280.0,265.8 282.0,264.7 284.0,263.6 286.0,262.5 288.0,261.4 290.0,260.3 292.0,259.2 294.0,258.1 296.0,257.1 298.0,256.1 300.0,255.1 302.0,254.2 304.0,253.3 306.0,252.3 308.0,251.5 310.0,250.6 312.0,249.9 314.0,249.1 316.0,248.5 318.0,247.8 320.0,247.1 322.0,246.4 324.0,245.6 326.0,244.8 328.0,244.1 330.0,243.3 332.0,242.5 334.0,241.7 336.0,241.0 338.0,240.2 340.0,239.6 342.0,238.9 344.0,238.2 346.0,237.6 348.0,237.0 350.0,236.5 352.0,236.0 354.0,235.6 356.0,235.1 358.0,234.7 360.0,234.3 362.0,234.0 364.0,233.7 366.0,233.4 368.0,233.1 370.0,232.9 372.0,232.7 374.0,232.5 376.0,232.4 378.0,232.3 380.0,232.2 382.0,232.1 384.0,232.1 386.0,232.2 388.0,232.3 390.0,232.4 392.0,232.6 394.0,232.7 396.0,232.8 398.0,233.0 400.0,233.0 402.0,233.1 404.0,233.1 406.0,233.2 408.0,233.2 410.0,233.3 412.0,233.3 414.0,233.4 416.0,233.5 418.0,233.5 420.0,233.4 422.0,233.2 424.0,233.0 426.0,232.7 428.0,232.4 430.0,232.1 432.0,231.8 434.0,231.5 436.0,231.3 438.0,231.0 440.0,230.7 442.0,230.4 444.0,230.1 446.0,229.9 448.0,229.6 450.0,229.3 452.0,229.0 454.0,228.7 456.0,228.4 458.0,228.2 460.0,227.8 462.0,227.5 464.0,227.2 466.0,226.9 468.0,226.6 470.0,226.3 472.0,225.9 474.0,225.6 476.0,225.3 478.0,225.0 480.0,224.7 482.0,224.4 484.0,224.1 486.0,223.9 488.0,223.7 490.0,223.5 492.0,223.3 494.0,223.1 496.0,222.9 498.0,222.8 500.0,222.6 502.0,222.4 504.0,222.3 506.0,222.1 508.0,221.9 510.0,221.7 512.0,221.5 514.0,221.2 516.0,221.0 518.0,220.7 520.0,220.4 522.0,220.1 524.0,219.7 526.0,219.3 528.0,218.9 530.0,218.5 532.0,218.0 534.0,217.5 536.0,217.0 538.0,216.5 540.0,215.9 542.0,215.3 544.0,214.7 546.0,214.1 548.0,213.5 550.0,212.9 552.0,212.3 554.0,211.6 556.0,211.0 558.0,210.5 560.0,209.9 562.0,209.4 564.0,208.9 566.0,208.5 568.0,208.0 570.0,207.5 572.0,207.0 574.0,206.5 576.0,205.9 578.0,205.4 580.0,204.9 582.0,204.4 584.0,203.9 586.0,203.4 588.0,202.9 590.0,202.5 592.0,202.0 594.0,201.5 596.0,201.0 598.0,200.5 600.0,200.0 602.0,199.4 604.0,198.9 606.0,198.4 608.0,197.8 610.0,197.3 612.0,196.7 614.0,196.2 616.0,195.6 618.0,195.1 620.0,194.7 622.0,194.3 624.0,194.0 626.0,193.8 628.0,193.5 630.0,193.3 632.0,193.0 634.0,192.8 636.0,192.5 638.0,192.2 640.0,191.9 642.0,191.7 644.0,191.4 646.0,191.1 648.0,190.8 650.0,190.6 652.0,190.3 654.0,190.0 656.0,189.7 658.0,189.3 660.0,189.0 662.0,188.6 664.0,188.2 666.0,187.8 668.0,187.3 670.0,186.8 672.0,186.2 674.0,185.6 676.0,184.9 678.0,184.1 680.0,183.2 682.0,182.2 684.0,181.1 686.0,179.9 688.0,178.7 690.0,177.6 692.0,176.5 694.0,175.5 696.0,174.5 698.0,173.5 700.0,172.6 702.0,171.6 704.0,170.7 706.0,169.8 708.0,168.9 710.0,168.1 712.0,167.3 714.0,166.6 716.0,165.9 718.0,165.2 720.0,164.6 722.0,164.0 724.0,163.5 726.0,163.0 728.0,162.6 730.0,162.2 732.0,161.9 734.0,161.7 736.0,161.6 738.0,161.4 740.0,161.3 742.0,161.2 744.0,161.1 746.0,161.1 748.0,161.0 750.0,160.9 752.0,160.9 754.0,160.8 756.0,160.8 758.0,160.9 760.0,161.0 762.0,161.0 764.0,161.1 766.0,161.2 768.0,161.4 770.0,161.5 772.0,161.7 774.0,161.9 776.0,162.1 778.0,162.3 780.0,162.6 782.0,162.8 784.0,163.1 786.0,163.5 788.0,163.8 790.0,164.1 792.0,164.4 794.0,164.7 796.0,165.0 798.0,165.3 800.0,165.6 802.0,165.8 804.0,166.0 806.0,166.2 808.0,166.4 810.0,166.6 812.0,166.7 814.0,166.8 816.0,166.9 818.0,166.9 820.0,166.9 822.0,166.9 824.0,166.9 826.0,166.8 828.0,166.7 830.0,166.6 832.0,166.4 834.0,166.2 836.0,165.9 838.0,165.6 840.0,165.3 842.0,165.0 844.0,164.7 846.0,164.3 848.0,163.9 850.0,163.5 852.0,163.1 854.0,162.7 856.0,162.2 858.0,161.8 860.0,161.3 862.0,160.8 864.0,160.3 866.0,159.9 868.0,159.4 870.0,159.0 872.0,158.5 874.0,158.1 876.0,157.6 878.0,157.2 880.0,156.8 882.0,156.4 884.0,155.9 886.0,155.6 888.0,155.2 890.0,154.8 892.0,154.4 894.0,154.0 896.0,153.6 898.0,153.1 900.0,152.8 902.0,152.4 904.0,151.9 906.0,151.6 908.0,151.2 910.0,150.8 912.0,150.4 914.0,150.0 916.0,149.6 918.0,149.2 920.0,148.8 922.0,148.4 924.0,148.1 926.0,147.7 928.0,147.4 930.0,147.0 932.0,146.7 934.0,146.4 936.0,146.0 938.0,145.7 940.0,145.4 942.0,145.0 944.0,144.7 946.0,144.3 948.0,144.0 950.0,143.5 952.0,143.1 954.0,142.6 956.0,142.1 958.0,141.5 960.0,140.9 962.0,140.3 964.0,139.6 966.0,139.0 968.0,138.4 970.0,137.8 972.0,137.2 974.0,136.6 976.0,136.0 978.0,135.4 980.0,134.7 982.0,134.1 984.0,133.4 986.0,132.7 988.0,132.1 990.0,131.4 992.0,130.7 994.0,130.1 996.0,129.4 998.0,128.8 1000.0,128.1 1002.0,127.4 1004.0,126.8 1006.0,126.1 1008.0,125.3 1010.0,124.6 1012.0,123.8 1014.0,123.0 1016.0,122.3 1018.0,121.5 1020.0,120.7 1022.0,119.9 1024.0,119.1 1026.0,118.3 1028.0,117.5 1030.0,116.7 1032.0,115.9" fill="none" stroke="#2a2a2a" stroke-width="1.0" />
<polyline points="0.0,351.2 2.0,350.1 4.0,348.9 6.0,347.7 8.0,346.5 10.0,345.3 12.0,344.2 14.0,343.3 16.0,342.4 18.0,341.6 20.0,340.8 22.0,339.9 24.0,339.1 26.0,338.2 28.0,337.2 30.0,336.3 32.0,335.2 34.0,334.3 36.0,333.3 38.0,332.4 40.0,331.5 42.0,330.7 44.0,329.9 46.0,329.1 48.0,328.5 50.0,328.0 52.0,327.8 54.0,327.7 56.0,327.7 58.0,327.8 60.0,327.9 62.0,328.1 64.0,328.2 66.0,328.4 68.0,328.7 70.0,328.9 72.0,329.1 74.0,329.2 76.0,329.1 78.0,329.0 80.0,328.7 82.0,328.4 84.0,328.0 86.0,327.5 88.0,326.9 90.0,326.1 92.0,325.2 94.0,324.0 96.0,322.6 98.0,321.1 100.0,319.4 102.0,317.6 104.0,315.7 106.0,313.7 108.0,311.6 110.0,309.4 112.0,307.2 114.0,305.1 116.0,303.1 118.0,301.2 120.0,299.4 122.0,297.6 124.0,295.8 126.0,293.9 128.0,292.0 130.0,290.0 132.0,287.9 134.0,285.6 136.0,283.1 138.0,280.4 140.0,277.5 142.0,274.5 144.0,271.3 146.0,268.1 148.0,264.7 150.0,261.3 152.0,257.8 154.0,254.5 156.0,251.2 158.0,248.4 160.0,246.1 162.0,244.2 164.0,242.6 166.0,241.4 168.0,240.2 170.0,239.1 172.0,238.0 174.0,237.0 176.0,236.1 178.0,235.3 180.0,234.5 182.0,233.7 184.0,233.0 186.0,232.4 188.0,231.8 190.0,231.3 192.0,230.8 194.0,230.3 196.0,229.8 198.0,229.3 200.0,228.7 202.0,228.1 204.0,227.4 206.0,226.8 208.0,226.1 210.0,225.2 212.0,224.3 214.0,223.3 216.0,222.3 218.0,221.2 220.0,220.1 222.0,219.0 224.0,217.8 226.0,216.6 228.0,215.5 230.0,214.3 232.0,213.0 234.0,211.8 236.0,210.6 238.0,209.4 240.0,208.1 242.0,206.8 244.0,205.1 246.0,203.2 248.0,201.1 250.0,198.8 252.0,196.2 254.0,193.8 256.0,191.2 258.0,188.8 260.0,186.2 262.0,183.8 264.0,181.5 266.0,179.2 268.0,177.1 270.0,175.0 272.0,173.1 274.0,171.4 276.0,170.0 278.0,168.8 280.0,167.8 282.0,166.9 284.0,166.2 286.0,165.7 288.0,165.3 290.0,165.1 292.0,164.9 294.0,164.8 296.0,164.6 298.0,164.4 300.0,164.2 302.0,164.0 304.0,163.7 306.0,163.5 308.0,163.3 310.0,163.2 312.0,163.2 314.0,163.2 316.0,163.4 318.0,163.5 320.0,163.6 322.0,163.6 324.0,163.6 326.0,163.5 328.0,163.4 330.0,163.3 332.0,163.2 334.0,163.3 336.0,163.5 338.0,163.8 340.0,164.3 342.0,164.8 344.0,165.3 346.0,165.9 348.0,166.4 350.0,167.0 352.0,167.6 354.0,168.2 356.0,168.8 358.0,169.5 360.0,170.2 362.0,171.1 364.0,172.0 366.0,173.0 368.0,174.0 370.0,175.1 372.0,176.3 374.0,177.7 376.0,179.2 378.0,181.1 380.0,183.2 382.0,185.5 384.0,188.0 386.0,190.8 388.0,193.4 390.0,196.0 392.0,198.4 394.0,200.8 396.0,203.0 398.0,205.0 400.0,206.8 402.0,208.3 404.0,209.5 406.0,210.5 408.0,211.4 410.0,212.2 412.0,212.9 414.0,213.5 416.0,214.0 418.0,214.4 420.0,214.6 422.0,214.6 424.0,214.5 426.0,214.3 428.0,213.9 430.0,213.5 432.0,213.0 434.0,212.5 436.0,211.8 438.0,211.2 440.0,210.7 442.0,210.2 444.0,209.8 446.0,209.5 448.0,209.1 450.0,208.8 452.0,208.5 454.0,208.3 456.0,208.0 458.0,207.8 460.0,207.5 462.0,207.3 464.0,207.0 466.0,206.8 468.0,206.4 470.0,205.9 472.0,205.4 474.0,204.8 476.0,204.0 478.0,203.5 480.0,203.2 482.0,203.2 484.0,203.5 486.0,204.0 488.0,204.5 490.0,204.9 492.0,205.4 494.0,205.8 496.0,206.2 498.0,206.6 500.0,206.9 502.0,207.2 504.0,207.4 506.0,207.6 508.0,207.7 510.0,207.7 512.0,207.5 514.0,207.3 516.0,207.0 518.0,206.5 520.0,206.0 522.0,205.4 524.0,204.8 526.0,204.0 528.0,203.2 530.0,202.2 532.0,201.2 534.0,200.0 536.0,198.8 538.0,197.4 540.0,196.1 542.0,194.7 544.0,193.3 546.0,191.8 548.0,190.2 550.0,188.6 552.0,187.0 554.0,185.3 556.0,183.5 558.0,181.8 560.0,180.2 562.0,178.5 564.0,177.0 566.0,175.5 568.0,174.1 570.0,172.8 572.0,171.6 574.0,170.5 576.0,169.5 578.0,168.5 580.0,167.6 582.0,166.8 584.0,166.0 586.0,165.3 588.0,164.6 590.0,163.9 592.0,163.3 594.0,162.8 596.0,162.2 598.0,161.8 600.0,161.3 602.0,160.8 604.0,160.3 606.0,159.8 608.0,159.2 610.0,158.5 612.0,157.7 614.0,156.8 616.0,155.8 618.0,155.0 620.0,154.5 622.0,154.2 624.0,154.2 626.0,154.5 628.0,154.9 630.0,155.4 632.0,156.0 634.0,156.8 636.0,157.7 638.0,158.4 640.0,158.9 642.0,159.1 644.0,159.2 646.0,159.1 648.0,158.8 650.0,158.5 652.0,158.2 654.0,157.8 656.0,157.2 658.0,156.8 660.0,156.3 662.0,155.8 664.0,155.2 666.0,154.8 668.0,154.1 670.0,153.4 672.0,152.5 674.0,151.5 676.0,150.3 678.0,149.0 680.0,147.4 682.0,145.7 684.0,143.7 686.0,141.4 688.0,139.1 690.0,136.6 692.0,134.1 694.0,131.6 696.0,129.3 698.0,127.1 700.0,125.1 702.0,123.3 704.0,121.7 706.0,120.2 708.0,118.9 710.0,117.7 712.0,116.6 714.0,115.5 716.0,114.7 718.0,114.1 720.0,113.6 722.0,113.3 724.0,113.3 726.0,113.3 728.0,113.3 730.0,113.6 732.0,114.1 734.0,114.7 736.0,115.5 738.0,116.5 740.0,117.5 742.0,118.5 744.0,119.5 746.0,120.5 748.0,121.5 750.0,122.5 752.0,123.6 754.0,124.7 756.0,125.8 758.0,126.9 760.0,128.1 762.0,129.2 764.0,130.3 766.0,131.4 768.0,132.5 770.0,133.7 772.0,135.0 774.0,136.4 776.0,137.9 778.0,139.7 780.0,141.5 782.0,143.3 784.0,145.2 786.0,147.2 788.0,149.2 790.0,151.1 792.0,153.0 794.0,154.8 796.0,156.5 798.0,158.1 800.0,159.6 802.0,161.0 804.0,162.2 806.0,163.3 808.0,164.3 810.0,165.1 812.0,165.8 814.0,166.3 816.0,166.7 818.0,167.0 820.0,167.2 822.0,167.3 824.0,167.3 826.0,167.2 828.0,167.0 830.0,166.7 832.0,166.2 834.0,165.7 836.0,165.1 838.0,164.3 840.0,163.5 842.0,162.7 844.0,161.8 846.0,160.8 848.0,159.8 850.0,158.8 852.0,157.9 854.0,157.1 856.0,156.2 858.0,155.3 860.0,154.4 862.0,153.5 864.0,152.5 866.0,151.5 868.0,150.5 870.0,149.4 872.0,148.3 874.0,147.2 876.0,146.1 878.0,144.9 880.0,143.8 882.0,142.6 884.0,141.5 886.0,140.3 888.0,139.2 890.0,138.3 892.0,137.4 894.0,136.6 896.0,135.9 898.0,135.2 900.0,134.4 902.0,133.6 904.0,132.7 906.0,131.8 908.0,130.9 910.0,130.1 912.0,129.3 914.0,128.5 916.0,127.8 918.0,127.0 920.0,126.2 922.0,125.4 924.0,124.5 926.0,123.7 928.0,122.9 930.0,122.0 932.0,121.2 934.0,120.4 936.0,119.6 938.0,118.8 940.0,118.0 942.0,117.2 944.0,116.4 946.0,115.6 948.0,114.8 950.0,114.0 952.0,113.2 954.0,112.3 956.0,111.4 958.0,110.4 960.0,109.5 962.0,108.4 964.0,107.5 966.0,106.5 968.0,105.6 970.0,104.6 972.0,103.7 974.0,102.8 976.0,101.8 978.0,100.6 980.0,99.3 982.0,97.9 984.0,96.4 986.0,94.9 988.0,93.4 990.0,92.0 992.0,90.5 994.0,89.1 996.0,87.7 998.0,86.3 1000.0,84.9 1002.0,83.6 1004.0,82.3 1006.0,81.0 1008.0,79.8 1010.0,78.6 1012.0,77.4 1014.0,76.3 1016.0,75.3 1018.0,74.3 1020.0,73.4 1022.0,72.5 1024.0,71.6 1026.0,70.6 1028.0,69.7 1030.0,68.8 1032.0,67.8" fill="none" stroke="#4a1450" stroke-width="1.05" />
<polyline points="1.0,309.3 3.0,306.9 5.1,305.8 7.1,308.4 9.2,309.5 11.2,309.8 13.3,310.5 15.3,309.4 17.4,309.6 19.4,300.4 21.5,294.3 23.5,295.6 25.6,297.1 27.6,299.0 29.7,300.1 31.7,292.0 33.8,280.1 35.8,280.0 37.9,279.3 39.9,276.3 42.0,275.9 44.0,279.8 46.1,283.4 48.1,290.1 50.2,287.9 52.2,291.7 54.2,290.8 56.3,292.8 58.3,298.5 60.4,304.4 62.4,306.3 64.5,313.1 66.5,327.4 68.6,329.0 70.6,330.1 72.7,330.6 74.7,328.9 76.8,326.7 78.8,324.1 80.9,314.1 82.9,308.7 85.0,309.4 87.0,306.5 89.1,305.2 91.1,300.9 93.2,296.5 95.2,288.1 97.3,277.0 99.3,262.9 101.4,254.5 103.4,254.4 105.4,249.8 107.5,243.0 109.5,238.1 111.6,237.4 113.6,234.5 115.7,233.7 117.7,231.6 119.8,234.2 121.8,242.5 123.9,245.9 125.9,245.2 128.0,243.3 130.0,239.6 132.1,217.0 134.1,204.5 136.2,195.9 138.2,181.8 140.3,170.1 142.3,163.2 144.4,162.8 146.4,163.7 148.5,171.5 150.5,172.1 152.6,176.1 154.6,185.8 156.6,185.5 158.7,184.7 160.7,184.1 162.8,183.7 164.8,185.9 166.9,184.6 168.9,184.7 171.0,185.3 173.0,186.5 175.1,187.4 177.1,189.2 179.2,191.2 181.2,196.1 183.3,200.4 185.3,202.1 187.4,202.8 189.4,202.2 191.5,191.5 193.5,188.1 195.6,188.4 197.6,191.1 199.7,195.4 201.7,196.2 203.8,198.4 205.8,198.7 207.8,199.0 209.9,203.7 211.9,201.1 214.0,191.6 216.0,179.8 218.1,172.7 220.1,170.1 222.2,170.0 224.2,172.9 226.3,180.8 228.3,185.2 230.4,189.0 232.4,183.5 234.5,166.4 236.5,167.3 238.6,168.1 240.6,167.7 242.7,162.6 244.7,144.3 246.8,116.3 248.8,102.5 250.9,93.3 252.9,83.3 255.0,84.3 257.0,90.0 259.0,101.8 261.1,118.4 263.1,124.7 265.2,124.2 267.2,122.9 269.3,121.6 271.3,121.0 273.4,118.2 275.4,118.3 277.5,118.1 279.5,116.5 281.6,111.4 283.6,110.5 285.7,111.1 287.7,112.2 289.8,116.5 291.8,122.5 293.9,128.3 295.9,136.9 298.0,144.3 300.0,138.6 302.1,138.2 304.1,137.7 306.2,137.6 308.2,140.7 310.2,140.2 312.3,141.4 314.3,144.2 316.4,148.5 318.4,149.4 320.5,148.3 322.5,147.3 324.6,148.6 326.6,151.1 328.7,154.7 330.7,147.3 332.8,139.6 334.8,134.7 336.9,131.2 338.9,129.6 341.0,133.8 343.0,137.1 345.1,139.4 347.1,140.2 349.2,141.5 351.2,144.7 353.3,148.9 355.3,153.5 357.4,160.9 359.4,162.3 361.4,163.2 363.5,163.6 365.5,166.6 367.6,169.8 369.6,175.5 371.7,181.0 373.7,181.2 375.8,181.4 377.8,181.6 379.9,168.8 381.9,169.5 384.0,172.4 386.0,179.5 388.1,186.1 390.1,194.2 392.2,203.5 394.2,214.8 396.3,232.3 398.3,233.1 400.4,234.3 402.4,236.8 404.5,236.4 406.5,236.6 408.6,243.8 410.6,237.9 412.6,231.1 414.7,227.5 416.7,218.5 418.8,214.5 420.8,212.3 422.9,211.6 424.9,208.3 427.0,211.6 429.0,211.1 431.1,206.5 433.1,204.3 435.2,194.1 437.2,184.3 439.3,180.8 441.3,182.0 443.4,183.7 445.4,186.3 447.5,190.2 449.5,191.3 451.6,191.6 453.6,191.7 455.7,194.9 457.7,197.3 459.8,196.2 461.8,190.6 463.8,191.4 465.9,192.2 467.9,188.7 470.0,189.9 472.0,189.6 474.1,182.7 476.1,173.0 478.2,159.1 480.2,154.9 482.3,156.5 484.3,161.9 486.4,161.6 488.4,165.0 490.5,165.2 492.5,164.5 494.6,164.9 496.6,171.7 498.7,177.3 500.7,183.3 502.8,186.1 504.8,198.4 506.9,205.1 508.9,210.0 511.0,213.2 513.0,211.3 515.0,210.5 517.1,200.4 519.1,188.1 521.2,184.0 523.2,179.3 525.3,182.8 527.3,184.4 529.4,183.8 531.4,180.7 533.5,176.5 535.5,168.0 537.6,158.7 539.6,150.7 541.7,145.6 543.7,151.8 545.8,154.4 547.8,156.1 549.9,157.2 551.9,151.5 554.0,144.6 556.0,132.0 558.1,123.1 560.1,120.7 562.2,120.6 564.2,122.9 566.2,123.0 568.3,128.0 570.3,131.0 572.4,133.5 574.4,133.3 576.5,131.2 578.5,131.1 580.6,131.5 582.6,130.8 584.7,132.9 586.7,133.8 588.8,135.8 590.8,138.3 592.9,141.5 594.9,140.0 597.0,140.6 599.0,141.9 601.1,142.6 603.1,143.1 605.2,143.6 607.2,142.5 609.3,141.7 611.3,135.1 613.4,131.1 615.4,116.8 617.4,109.3 619.5,105.0 621.5,104.2 623.6,109.6 625.6,104.8 627.7,104.2 629.7,104.5 631.8,105.3 633.8,110.8 635.9,118.3 637.9,130.1 640.0,149.0 642.0,158.2 644.1,154.7 646.1,149.6 648.2,139.9 650.2,131.7 652.3,126.6 654.3,123.3 656.4,129.0 658.4,134.7 660.5,138.7 662.5,142.2 664.6,145.3 666.6,144.9 668.6,143.7 670.7,134.0 672.7,126.5 674.8,117.1 676.8,111.3 678.9,103.3 680.9,97.1 683.0,91.6 685.0,91.6 687.1,91.0 689.1,71.1 691.2,63.1 693.2,58.4 695.3,60.3 697.3,61.4 699.4,62.8 701.4,61.8 703.5,66.5 705.5,66.7 707.6,65.8 709.6,66.0 711.7,66.1 713.7,66.8 715.8,67.4 717.8,66.5 719.8,64.7 721.9,66.8 723.9,68.9 726.0,71.4 728.0,73.5 730.1,76.6 732.1,84.2 734.2,88.6 736.2,95.4 738.3,93.4 740.3,95.9 742.4,98.7 744.4,100.8 746.5,103.3 748.5,105.8 750.6,108.5 752.6,119.8 754.7,136.8 756.7,136.5 758.8,136.1 760.8,139.1 762.9,141.7 764.9,142.9 767.0,144.5 769.0,146.6 771.0,144.0 773.1,140.8 775.1,141.9 777.2,141.7 779.2,142.3 781.3,143.0 783.3,144.0 785.4,145.2 787.4,147.0 789.5,151.2 791.5,158.3 793.6,159.7 795.6,161.0 797.7,163.2 799.7,165.0 801.8,168.1 803.8,174.1 805.9,174.1 807.9,173.8 810.0,177.3 812.0,184.2 814.1,185.4 816.1,186.6 818.2,186.1 820.2,177.5 822.2,170.8 824.3,160.6 826.3,158.4 828.4,155.5 830.4,153.3 832.5,151.9 834.5,146.9 836.6,148.7 838.6,146.7 840.7,143.5 842.7,137.8 844.8,133.3 846.8,131.9 848.9,133.3 850.9,133.0 853.0,131.9 855.0,132.7 857.1,129.7 859.1,131.7 861.2,130.5 863.2,127.3 865.3,123.7 867.3,121.0 869.4,111.6 871.4,105.0 873.4,98.0 875.5,92.4 877.5,93.0 879.6,88.9 881.6,93.1 883.7,96.4 885.7,98.6 887.8,98.2 889.8,97.2 891.9,97.6 893.9,98.6 896.0,101.0 898.0,109.2 900.1,108.3 902.1,103.9 904.2,97.4 906.2,94.2 908.3,92.1 910.3,90.7 912.4,91.6 914.4,93.5 916.5,97.3 918.5,102.0 920.6,100.0 922.6,95.9 924.6,93.1 926.7,91.8 928.7,88.0 930.8,87.8 932.8,87.9 934.9,87.7 936.9,87.6 939.0,87.8 941.0,88.3 943.1,89.3 945.1,89.4 947.2,89.7 949.2,87.7 951.3,86.1 953.3,85.2 955.4,82.0 957.4,77.8 959.5,72.2 961.5,70.3 963.6,69.9 965.6,68.8 967.7,69.2 969.7,73.5 971.8,75.4 973.8,72.7 975.8,70.8 977.9,70.0 979.9,68.7 982.0,66.6 984.0,63.5 986.1,59.5 988.1,54.9 990.2,50.1 992.2,44.7 994.3,39.7 996.3,37.1 998.4,34.5 1000.4,37.2 1002.5,40.6 1004.5,44.4 1006.6,44.8 1008.6,45.0 1010.7,44.3 1012.7,44.0 1014.8,44.2 1016.8,44.3 1018.9,44.5 1020.9,43.6 1023.0,40.9 1025.0,41.4 1027.0,41.8 1029.1,39.9 1031.1,36.6" fill="none" stroke="#00f000" stroke-width="1.0" />
<polyline points="1.0,336.6 3.0,333.1 5.1,331.5 7.1,329.2 9.2,331.2 11.2,332.4 13.3,331.4 15.3,330.6 17.4,330.5 19.4,331.6 21.5,331.1 23.5,332.7 25.6,335.3 27.6,337.9 29.7,341.7 31.7,340.4 33.8,340.4 35.8,339.3 37.9,337.6 39.9,335.8 42.0,334.5 44.0,336.8 46.1,333.4 48.1,326.4 50.2,338.2 52.2,343.2 54.2,354.6 56.3,359.3 58.3,357.2 60.4,353.9 62.4,356.1 64.5,353.3 66.5,342.9 68.6,342.3 70.6,342.4 72.7,341.7 74.7,341.9 76.8,342.2 78.8,342.6 80.9,345.4 82.9,345.2 85.0,342.7 87.0,341.2 89.1,338.2 91.1,335.8 93.2,333.4 95.2,331.8 97.3,330.5 99.3,331.0 101.4,328.9 103.4,322.5 105.4,316.9 107.5,310.4 109.5,303.6 111.6,294.7 113.6,287.7 115.7,282.5 117.7,278.9 119.8,275.2 121.8,266.8 123.9,261.5 125.9,261.2 128.0,259.8 130.0,258.9 132.1,266.3 134.1,267.2 136.2,266.7 138.2,266.0 140.3,262.6 142.3,257.2 144.4,248.0 146.4,237.2 148.5,222.7 150.5,218.3 152.6,212.2 154.6,201.6 156.6,202.9 158.7,203.8 160.7,203.0 162.8,202.4 164.8,202.0 166.9,209.7 168.9,215.3 171.0,219.7 173.0,222.7 175.1,224.7 177.1,225.0 179.2,232.4 181.2,234.8 183.3,231.0 185.3,233.8 187.4,233.0 189.4,231.9 191.5,233.8 193.5,233.5 195.6,233.6 197.6,231.5 199.7,232.2 201.7,236.6 203.8,238.1 205.8,241.0 207.8,242.8 209.9,235.6 211.9,232.1 214.0,233.4 216.0,235.5 218.1,235.0 220.1,232.3 222.2,228.5 224.2,222.3 226.3,213.7 228.3,205.4 230.4,201.5 232.4,200.9 234.5,205.8 236.5,207.0 238.6,208.0 240.6,207.3 242.7,205.8 244.7,207.9 246.8,213.0 248.8,209.8 250.9,206.8 252.9,205.0 255.0,196.4 257.0,183.0 259.0,166.1 261.1,146.2 263.1,134.7 265.2,132.8 267.2,134.5 269.3,137.0 271.3,135.4 273.4,134.5 275.4,134.3 277.5,137.5 279.5,145.0 281.6,163.8 283.6,176.6 285.7,185.6 287.7,194.5 289.8,198.8 291.8,190.3 293.9,182.6 295.9,178.8 298.0,175.8 300.0,176.8 302.1,176.8 304.1,176.4 306.2,173.9 308.2,169.0 310.2,168.3 312.3,169.4 314.3,167.9 316.4,165.2 318.4,167.6 320.5,173.2 322.5,180.5 324.6,184.3 326.6,186.3 328.7,183.7 330.7,183.4 332.8,183.5 334.8,183.3 336.9,183.1 338.9,182.4 341.0,184.8 343.0,189.3 345.1,194.7 347.1,195.1 349.2,195.2 351.2,193.0 353.3,191.2 355.3,195.5 357.4,196.1 359.4,200.6 361.4,202.7 363.5,203.2 365.5,203.6 367.6,201.5 369.6,201.1 371.7,201.2 373.7,206.6 375.8,211.8 377.8,217.8 379.9,255.7 381.9,274.3 384.0,288.2 386.0,287.8 388.1,289.9 390.1,292.1 392.2,286.6 394.2,276.3 396.3,259.6 398.3,259.8 400.4,259.8 402.4,257.6 404.5,257.6 406.5,257.3 408.6,252.1 410.6,253.5 412.6,255.0 414.7,255.0 416.7,256.2 418.8,255.0 420.8,253.3 422.9,251.2 424.9,248.1 427.0,239.9 429.0,236.6 431.1,234.9 433.1,231.3 435.2,232.4 437.2,232.2 439.3,229.2 441.3,224.2 443.4,222.3 445.4,219.9 447.5,216.7 449.5,216.1 451.6,217.9 453.6,218.6 455.7,215.4 457.7,211.4 459.8,209.4 461.8,210.6 463.8,211.8 465.9,212.9 467.9,212.6 470.0,211.6 472.0,210.1 474.1,210.3 476.1,211.5 478.2,213.7 480.2,213.1 482.3,210.1 484.3,210.2 486.4,208.6 488.4,211.1 490.5,219.0 492.5,226.8 494.6,236.4 496.6,238.6 498.7,241.7 500.7,243.9 502.8,245.6 504.8,237.0 506.9,233.7 508.9,231.8 511.0,227.2 513.0,227.8 515.0,228.3 517.1,231.7 519.1,234.0 521.2,233.2 523.2,231.7 525.3,230.2 527.3,225.3 529.4,222.2 531.4,218.6 533.5,213.5 535.5,212.7 537.6,212.8 539.6,211.5 541.7,209.9 543.7,201.6 545.8,195.3 547.8,187.1 549.9,180.7 551.9,178.7 554.0,177.7 556.0,178.8 558.1,178.3 560.1,176.1 562.2,170.1 564.2,163.7 566.2,158.8 568.3,152.4 570.3,147.6 572.4,144.1 574.4,143.8 576.5,150.0 578.5,151.1 580.6,152.3 582.6,157.7 584.7,157.7 586.7,158.1 588.8,157.0 590.8,156.7 592.9,153.5 594.9,153.5 597.0,157.4 599.0,158.3 601.1,159.8 603.1,160.8 605.2,161.2 607.2,160.4 609.3,160.1 611.3,161.1 613.4,160.8 615.4,164.0 617.4,163.6 619.5,161.3 621.5,157.7 623.6,158.6 625.6,182.5 627.7,196.6 629.7,205.5 631.8,211.6 633.8,212.2 635.9,210.2 637.9,208.4 640.0,192.3 642.0,181.8 644.1,182.4 646.1,183.3 648.2,185.4 650.2,186.3 652.3,185.8 654.3,184.1 656.4,174.7 658.4,168.5 660.5,163.8 662.5,159.6 664.6,156.1 666.6,156.8 668.6,161.1 670.7,162.4 672.7,162.6 674.8,163.4 676.8,162.6 678.9,161.9 680.9,160.0 683.0,156.9 685.0,151.2 687.1,139.4 689.1,141.3 691.2,137.3 693.2,132.9 695.3,126.5 697.3,121.3 699.4,114.8 701.4,108.3 703.5,96.1 705.5,91.1 707.6,89.4 709.6,90.7 711.7,92.0 713.7,90.1 715.8,92.7 717.8,97.5 719.8,107.8 721.9,112.2 723.9,118.3 726.0,124.9 728.0,130.3 730.1,134.9 732.1,134.2 734.2,128.7 736.2,123.9 738.3,140.1 740.3,148.9 742.4,153.6 744.4,159.0 746.5,165.1 748.5,169.1 750.6,171.1 752.6,163.4 754.7,150.8 756.7,158.0 758.8,166.8 760.8,168.5 762.9,169.9 764.9,170.3 767.0,170.0 769.0,168.7 771.0,167.2 773.1,167.2 775.1,173.5 777.2,183.8 779.2,189.9 781.3,193.0 783.3,194.9 785.4,196.0 787.4,197.9 789.5,206.7 791.5,213.6 793.6,223.8 795.6,226.0 797.7,227.0 799.7,223.8 801.8,220.0 803.8,215.6 805.9,211.6 807.9,211.8 810.0,209.2 812.0,203.2 814.1,202.5 816.1,200.5 818.2,200.1 820.2,202.2 822.2,202.2 824.3,203.8 826.3,202.9 828.4,201.0 830.4,197.9 832.5,193.6 834.5,189.7 836.6,182.4 838.6,179.4 840.7,176.9 842.7,176.0 844.8,172.2 846.8,168.1 848.9,163.7 850.9,159.3 853.0,157.7 855.0,154.3 857.1,151.2 859.1,151.8 861.2,150.1 863.2,149.2 865.3,148.6 867.3,147.1 869.4,148.2 871.4,147.4 873.4,146.3 875.5,145.5 877.5,138.4 879.6,134.5 881.6,134.4 883.7,133.9 885.7,130.2 887.8,129.6 889.8,136.4 891.9,140.3 893.9,142.6 896.0,140.9 898.0,132.6 900.1,132.2 902.1,132.1 904.2,132.2 906.2,131.8 908.3,130.2 910.3,127.7 912.4,123.9 914.4,120.4 916.5,116.4 918.5,111.3 920.6,109.9 922.6,110.1 924.6,109.5 926.7,108.8 928.7,108.8 930.8,108.4 932.8,113.9 934.9,120.0 936.9,125.2 939.0,126.4 941.0,125.2 943.1,123.5 945.1,121.7 947.2,117.7 949.2,116.5 951.3,116.0 953.3,113.9 955.4,111.0 957.4,109.2 959.5,108.1 961.5,105.3 963.6,102.1 965.6,99.9 967.7,97.0 969.7,94.8 971.8,90.1 973.8,88.7 975.8,87.6 977.9,87.0 979.9,86.4 982.0,85.8 984.0,85.5 986.1,85.2 988.1,82.4 990.2,81.5 992.2,81.0 994.3,79.8 996.3,76.7 998.4,73.1 1000.4,68.9 1002.5,64.4 1004.5,59.8 1006.6,59.4 1008.6,57.6 1010.7,56.5 1012.7,56.2 1014.8,56.9 1016.8,61.5 1018.9,62.2 1020.9,61.5 1023.0,61.0 1025.0,62.1 1027.0,62.0 1029.1,61.1 1031.1,61.0" fill="none" stroke="#00f000" stroke-width="1.0" />
<polyline points="1.0,332.5 3.0,330.3 5.1,328.7 7.1,327.9 9.2,327.7 11.2,327.4 13.3,326.8 15.3,325.8 17.4,325.3 19.4,323.0 21.5,320.8 23.5,320.8 25.6,321.1 27.6,321.7 29.7,322.5 31.7,320.2 33.8,317.1 35.8,316.3 37.9,315.1 39.9,313.4 42.0,312.4 44.0,313.1 46.1,312.7 48.1,312.2 50.2,314.1 52.2,316.0 54.2,318.5 56.3,320.4 58.3,321.7 60.4,322.9 62.4,324.4 64.5,325.9 66.5,327.5 68.6,328.4 70.6,329.3 72.7,329.9 74.7,330.1 76.8,330.2 78.8,330.1 80.9,328.7 82.9,327.5 85.0,327.1 87.0,326.0 89.1,324.8 91.1,323.0 93.2,321.0 95.2,318.2 97.3,314.6 99.3,310.6 101.4,306.9 103.4,304.1 105.4,300.3 107.5,295.8 109.5,291.4 111.6,287.3 113.6,283.1 115.7,279.8 117.7,276.5 119.8,274.3 121.8,272.5 123.9,270.5 125.9,268.7 128.0,266.6 130.0,264.1 132.1,259.3 134.1,255.1 136.2,251.3 138.2,246.1 140.3,240.7 142.3,235.7 144.4,231.2 146.4,226.6 148.5,222.7 150.5,219.5 152.6,216.8 154.6,214.5 156.6,212.9 158.7,211.2 160.7,209.3 162.8,207.7 164.8,206.8 166.9,207.0 168.9,207.4 171.0,207.9 173.0,208.4 175.1,208.7 177.1,208.9 179.2,210.9 181.2,212.6 183.3,213.0 185.3,214.3 187.4,214.6 189.4,214.5 191.5,212.7 193.5,211.9 195.6,211.9 197.6,211.9 199.7,213.0 201.7,214.3 203.8,215.3 205.8,216.3 207.8,217.1 209.9,216.9 211.9,215.7 214.0,214.0 216.0,211.6 218.1,209.5 220.1,207.8 222.2,206.3 224.2,204.9 226.3,204.1 228.3,202.6 230.4,201.9 232.4,199.9 234.5,196.4 236.5,196.0 238.6,195.6 240.6,194.6 242.7,192.5 244.7,188.1 246.8,181.8 248.8,176.4 250.9,171.7 252.9,167.1 255.0,163.3 257.0,159.5 259.0,156.2 261.1,153.4 263.1,150.3 265.2,147.9 267.2,146.2 269.3,144.9 271.3,143.0 273.4,140.8 275.4,139.5 277.5,139.0 279.5,139.3 281.6,141.6 283.6,144.0 285.7,146.1 287.7,148.6 289.8,151.0 291.8,151.0 293.9,151.1 295.9,152.6 298.0,154.0 300.0,153.5 302.1,153.8 304.1,153.9 306.2,153.6 308.2,153.4 310.2,153.3 312.3,153.9 314.3,154.3 316.4,154.8 318.4,155.8 320.5,157.1 322.5,158.8 324.6,160.4 326.6,162.0 328.7,162.8 330.7,161.7 332.8,160.3 334.8,159.2 336.9,158.4 338.9,157.7 341.0,159.1 343.0,160.9 345.1,162.8 347.1,163.5 349.2,164.2 351.2,164.8 353.3,165.7 355.3,168.1 357.4,170.5 359.4,172.6 361.4,174.1 363.5,175.1 365.5,176.6 367.6,177.6 369.6,179.6 371.7,181.6 373.7,183.8 375.8,185.9 377.8,188.3 379.9,195.0 381.9,201.0 384.0,206.7 386.0,210.4 388.1,214.5 390.1,218.9 392.2,222.0 394.2,224.3 396.3,226.4 398.3,228.5 400.4,230.4 402.4,231.9 404.5,233.2 406.5,234.5 408.6,236.0 410.6,236.1 412.6,235.8 414.7,235.6 416.7,234.4 418.8,233.4 420.8,232.7 422.9,232.0 424.9,230.5 427.0,229.2 429.0,228.0 431.1,226.2 433.1,224.4 435.2,221.7 437.2,218.7 439.3,216.2 441.3,214.4 443.4,213.3 445.4,212.4 447.5,211.7 449.5,211.1 451.6,210.9 453.6,210.5 455.7,210.0 457.7,209.2 459.8,208.1 461.8,206.6 463.8,206.5 465.9,206.5 467.9,205.3 470.0,204.9 472.0,204.1 474.1,202.2 476.1,199.7 478.2,196.4 480.2,194.4 482.3,193.1 484.3,193.5 486.4,192.4 488.4,193.1 490.5,194.4 492.5,195.9 494.6,198.1 496.6,200.4 498.7,202.8 500.7,205.3 502.8,207.1 504.8,208.7 506.9,210.3 508.9,211.8 511.0,212.3 513.0,212.7 515.0,213.3 517.1,212.3 519.1,210.4 521.2,209.3 523.2,207.9 525.3,208.1 527.3,207.2 529.4,206.1 531.4,204.3 533.5,201.8 535.5,199.1 537.6,196.2 539.6,193.1 541.7,190.5 543.7,188.9 545.8,186.9 547.8,184.4 549.9,182.0 551.9,179.1 554.0,176.0 556.0,172.0 558.1,168.4 560.1,165.7 562.2,162.8 564.2,160.2 566.2,157.6 568.3,155.8 570.3,153.9 572.4,152.4 574.4,151.0 576.5,150.8 578.5,150.1 580.6,149.7 582.6,150.0 584.7,150.0 586.7,149.9 588.8,149.7 590.8,149.9 592.9,149.7 594.9,149.1 597.0,150.0 599.0,150.4 601.1,150.8 603.1,151.2 605.2,151.5 607.2,151.1 609.3,150.9 611.3,149.6 613.4,148.5 615.4,145.8 617.4,143.5 619.5,141.4 621.5,139.6 623.6,140.2 625.6,144.0 627.7,147.1 629.7,149.4 631.8,151.5 633.8,153.6 635.9,155.5 637.9,158.6 640.0,160.2 642.0,160.9 644.1,161.0 646.1,160.7 648.2,159.5 650.2,158.2 652.3,157.0 654.3,155.8 656.4,154.7 658.4,154.4 660.5,154.0 662.5,153.5 664.6,153.2 666.6,153.0 668.6,153.6 670.7,151.5 672.7,149.6 674.8,147.2 676.8,145.0 678.9,142.3 680.9,139.6 683.0,136.6 685.0,134.2 687.1,130.2 689.1,124.8 691.2,120.4 693.2,116.5 695.3,113.5 697.3,110.8 699.4,107.9 701.4,104.4 703.5,101.0 705.5,98.1 707.6,95.8 709.6,94.4 711.7,93.3 713.7,91.7 715.8,91.2 717.8,91.1 719.8,92.2 721.9,93.2 723.9,94.7 726.0,96.6 728.0,98.5 730.1,100.6 732.1,102.6 734.2,102.9 736.2,103.9 738.3,107.7 740.3,111.1 742.4,113.8 744.4,116.6 746.5,119.8 748.5,122.6 750.6,125.0 752.6,127.2 754.7,129.5 756.7,132.3 758.8,135.6 760.8,138.1 762.9,140.4 764.9,142.2 767.0,143.8 769.0,145.2 771.0,145.4 773.1,145.6 775.1,148.1 777.2,151.2 779.2,153.8 781.3,155.8 783.3,157.6 785.4,159.1 787.4,161.0 789.5,165.0 791.5,169.5 793.6,173.6 795.6,176.1 797.7,178.4 799.7,179.6 801.8,180.8 803.8,182.3 805.9,182.6 807.9,183.5 810.0,184.5 812.0,185.5 814.1,186.4 816.1,186.9 818.2,187.3 820.2,186.3 822.2,185.1 824.3,183.3 826.3,182.5 828.4,181.2 830.4,179.8 832.5,178.1 834.5,175.6 836.6,173.7 838.6,171.8 840.7,169.7 842.7,167.3 844.8,164.5 846.8,162.2 848.9,160.4 850.9,158.2 853.0,156.5 855.0,154.9 857.1,152.5 859.1,152.0 861.2,150.4 863.2,148.5 865.3,146.6 867.3,144.7 869.4,141.9 871.4,139.1 873.4,136.1 875.5,133.4 877.5,130.6 879.6,127.4 881.6,126.9 883.7,126.4 885.7,125.0 887.8,123.8 889.8,124.2 891.9,124.5 893.9,124.8 896.0,124.6 898.0,124.2 900.1,123.6 902.1,122.3 904.2,120.4 906.2,119.1 908.3,117.7 910.3,116.2 912.4,114.9 914.4,113.9 916.5,113.2 918.5,112.6 920.6,111.3 922.6,109.8 924.6,108.4 926.7,107.3 928.7,105.8 930.8,105.0 932.8,105.6 934.9,106.6 936.9,107.5 939.0,107.7 941.0,107.5 943.1,107.2 945.1,106.8 947.2,105.8 949.2,104.9 951.3,104.2 953.3,103.2 955.4,101.5 957.4,99.7 959.5,97.6 961.5,95.8 963.6,94.3 965.6,92.8 967.7,91.5 969.7,91.2 971.8,89.9 973.8,88.3 975.8,86.9 977.9,85.9 979.9,84.8 982.0,83.6 984.0,82.1 986.1,80.4 988.1,78.0 990.2,75.9 992.2,73.6 994.3,71.2 996.3,68.9 998.4,66.4 1000.4,64.9 1002.5,63.6 1004.5,62.4 1006.6,61.4 1008.6,60.2 1010.7,59.0 1012.7,58.1 1014.8,57.6 1016.8,58.0 1018.9,57.7 1020.9,57.0 1023.0,55.8 1025.0,55.8 1027.0,55.5 1029.1,54.5 1031.1,53.4" fill="none" stroke="#153a3a" stroke-width="1.0" />
<polyline points="1.0,329.6 3.0,327.2 5.1,325.7 7.1,325.0 9.2,325.2 11.2,325.1 13.3,324.5 15.3,323.6 17.4,323.2 19.4,320.6 21.5,318.3 23.5,318.5 25.6,319.1 27.6,320.1 29.7,321.2 31.7,318.6 33.8,315.0 35.8,314.2 37.9,313.0 39.9,311.1 42.0,310.1 44.0,311.3 46.1,311.0 48.1,310.6 50.2,313.0 52.2,315.5 54.2,318.6 56.3,320.9 58.3,322.5 60.4,323.8 62.4,325.5 64.5,327.3 66.5,329.0 68.6,330.0 70.6,331.0 72.7,331.5 74.7,331.6 76.8,331.5 78.8,331.2 80.9,329.5 82.9,327.9 85.0,327.3 87.0,325.9 89.1,324.5 91.1,322.4 93.2,320.0 95.2,316.7 97.3,312.5 99.3,307.7 101.4,303.6 103.4,300.5 105.4,296.3 107.5,291.2 109.5,286.3 111.6,281.9 113.6,277.4 115.7,274.0 117.7,270.6 119.8,268.6 121.8,267.0 123.9,265.1 125.9,263.6 128.0,261.5 130.0,259.1 132.1,253.8 134.1,249.2 136.2,245.2 138.2,239.6 140.3,233.6 142.3,228.3 144.4,223.6 146.4,218.8 148.5,214.9 150.5,211.9 152.6,209.5 154.6,207.5 156.6,206.3 158.7,204.9 160.7,203.3 162.8,202.0 164.8,201.5 166.9,202.4 168.9,203.4 171.0,204.4 173.0,205.4 175.1,206.1 177.1,206.7 179.2,209.3 181.2,211.6 183.3,212.2 185.3,213.9 187.4,214.3 189.4,214.2 191.5,212.1 193.5,211.1 195.6,211.2 197.6,211.3 199.7,212.7 201.7,214.3 203.8,215.6 205.8,216.7 207.8,217.7 209.9,217.3 211.9,215.9 214.0,213.7 216.0,210.9 218.1,208.4 220.1,206.4 222.2,204.7 224.2,203.2 226.3,202.4 228.3,200.7 230.4,200.1 232.4,197.9 234.5,193.9 236.5,193.6 238.6,193.4 240.6,192.5 242.7,190.1 244.7,185.0 246.8,177.6 248.8,171.4 250.9,166.3 252.9,161.3 255.0,157.2 257.0,153.2 259.0,150.0 261.1,147.3 263.1,144.2 265.2,141.9 267.2,140.5 269.3,139.5 271.3,137.8 273.4,135.7 275.4,134.6 277.5,134.5 279.5,135.4 281.6,138.7 283.6,141.9 285.7,144.7 287.7,147.9 289.8,150.9 291.8,150.9 293.9,151.1 295.9,152.9 298.0,154.6 300.0,153.9 302.1,154.2 304.1,154.3 306.2,153.9 308.2,153.6 310.2,153.4 312.3,154.2 314.3,154.7 316.4,155.3 318.4,156.3 320.5,157.9 322.5,159.9 324.6,161.8 326.6,163.5 328.7,164.4 330.7,162.8 332.8,161.0 334.8,159.6 336.9,158.5 338.9,157.7 341.0,159.4 343.0,161.5 345.1,163.9 347.1,164.5 349.2,165.3 351.2,165.9 353.3,166.9 355.3,169.7 357.4,172.5 359.4,174.8 361.4,176.4 363.5,177.3 365.5,178.9 367.6,180.0 369.6,182.0 371.7,184.3 373.7,186.6 375.8,188.9 377.8,191.5 379.9,199.4 381.9,206.2 384.0,212.6 386.0,216.4 388.1,220.7 390.1,225.5 392.2,228.5 394.2,230.6 396.3,232.5 398.3,234.3 400.4,236.0 402.4,237.3 404.5,238.3 406.5,239.2 408.6,240.6 410.6,240.2 412.6,239.4 414.7,238.7 416.7,236.9 418.8,235.5 420.8,234.3 422.9,233.3 424.9,231.4 427.0,229.7 429.0,228.2 431.1,225.9 433.1,223.8 435.2,220.6 437.2,217.0 439.3,214.2 441.3,212.1 443.4,211.0 445.4,210.2 447.5,209.6 449.5,209.1 451.6,209.0 453.6,208.8 455.7,208.4 457.7,207.6 459.8,206.4 461.8,204.7 463.8,204.8 465.9,205.0 467.9,203.7 470.0,203.4 472.0,202.6 474.1,200.5 476.1,197.6 478.2,193.8 480.2,191.6 482.3,190.4 484.3,191.1 486.4,190.0 488.4,191.1 490.5,193.0 492.5,194.9 494.6,197.8 496.6,200.6 498.7,203.5 500.7,206.5 502.8,208.5 504.8,210.3 506.9,212.1 508.9,213.8 511.0,214.2 513.0,214.5 515.0,214.9 517.1,213.6 519.1,211.1 521.2,209.7 523.2,207.9 525.3,208.2 527.3,207.1 529.4,205.8 531.4,203.6 533.5,200.6 535.5,197.4 537.6,194.0 539.6,190.5 541.7,187.6 543.7,185.9 545.8,183.9 547.8,181.1 549.9,178.5 551.9,175.4 554.0,172.0 556.0,167.6 558.1,163.6 560.1,160.9 562.2,157.9 564.2,155.3 566.2,152.6 568.3,151.0 570.3,149.3 572.4,147.9 574.4,146.7 576.5,147.0 578.5,146.5 580.6,146.4 582.6,147.2 584.7,147.4 586.7,147.6 588.8,147.6 590.8,148.1 592.9,148.0 594.9,147.6 597.0,148.7 599.0,149.4 601.1,150.1 603.1,150.6 605.2,151.0 607.2,150.6 609.3,150.4 611.3,148.9 613.4,147.6 615.4,144.4 617.4,141.7 619.5,139.3 621.5,137.4 623.6,138.4 625.6,143.3 627.7,147.1 629.7,150.0 631.8,152.5 633.8,154.8 635.9,157.1 637.9,160.7 640.0,162.4 642.0,163.0 644.1,162.9 646.1,162.4 648.2,160.7 650.2,158.9 652.3,157.4 654.3,155.8 656.4,154.6 658.4,154.1 660.5,153.7 662.5,153.2 664.6,152.8 666.6,152.7 668.6,153.3 670.7,150.9 672.7,148.6 674.8,145.7 676.8,143.3 678.9,140.2 680.9,137.1 683.0,133.7 685.0,131.1 687.1,126.6 689.1,120.3 691.2,115.4 693.2,111.2 695.3,108.2 697.3,105.4 699.4,102.5 701.4,98.9 703.5,95.2 705.5,92.4 707.6,90.2 709.6,89.2 711.7,88.4 713.7,87.0 715.8,86.9 717.8,87.3 719.8,89.0 721.9,90.5 723.9,92.7 726.0,95.3 728.0,97.7 730.1,100.3 732.1,102.9 734.2,103.2 736.2,104.4 738.3,108.9 740.3,112.9 742.4,116.1 744.4,119.3 746.5,122.8 748.5,125.9 750.6,128.5 752.6,130.7 754.7,133.2 756.7,136.3 758.8,139.8 760.8,142.4 762.9,144.8 764.9,146.5 767.0,147.9 769.0,149.2 771.0,149.0 773.1,148.9 775.1,151.5 777.2,155.0 779.2,157.7 781.3,159.7 783.3,161.4 785.4,162.9 787.4,164.8 789.5,169.3 791.5,174.2 793.6,178.8 795.6,181.2 797.7,183.4 799.7,184.4 801.8,185.3 803.8,186.7 805.9,186.5 807.9,187.2 810.0,188.0 812.0,188.9 814.1,189.6 816.1,189.8 818.2,190.0 820.2,188.5 822.2,186.8 824.3,184.4 826.3,183.3 828.4,181.7 830.4,179.8 832.5,177.7 834.5,174.7 836.6,172.5 838.6,170.3 840.7,167.9 842.7,165.2 844.8,162.0 846.8,159.4 848.9,157.6 850.9,155.3 853.0,153.5 855.0,151.8 857.1,149.2 859.1,148.9 861.2,147.3 863.2,145.4 865.3,143.5 867.3,141.5 869.4,138.3 871.4,135.4 873.4,132.1 875.5,129.2 877.5,126.3 879.6,122.9 881.6,122.8 883.7,122.5 885.7,121.3 887.8,120.3 889.8,121.2 891.9,121.9 893.9,122.4 896.0,122.5 898.0,122.3 900.1,121.8 902.1,120.3 904.2,118.3 906.2,116.9 908.3,115.4 910.3,113.9 912.4,112.6 914.4,111.6 916.5,111.0 918.5,110.4 920.6,109.1 922.6,107.5 924.6,106.1 926.7,105.0 928.7,103.4 930.8,102.7 932.8,103.7 934.9,105.1 936.9,106.3 939.0,106.8 941.0,106.6 943.1,106.4 945.1,105.9 947.2,104.9 949.2,103.8 951.3,103.1 953.3,102.0 955.4,100.0 957.4,98.0 959.5,95.6 961.5,93.7 963.6,92.1 965.6,90.5 967.7,89.1 969.7,89.0 971.8,87.7 973.8,86.0 975.8,84.6 977.9,83.6 979.9,82.5 982.0,81.2 984.0,79.7 986.1,77.9 988.1,75.2 990.2,72.9 992.2,70.5 994.3,67.9 996.3,65.5 998.4,62.8 1000.4,61.3 1002.5,60.1 1004.5,59.1 1006.6,58.3 1008.6,57.1 1010.7,56.0 1012.7,55.2 1014.8,54.9 1016.8,55.7 1018.9,55.7 1020.9,55.0 1023.0,53.8 1025.0,53.9 1027.0,53.8 1029.1,52.8 1031.1,51.6" fill="none" stroke="#153a3a" stroke-width="1.0" />
<polyline points="1.0,323.0 3.0,320.0 5.1,318.6 7.1,318.8 9.2,320.3 11.2,321.1 13.3,321.0 15.3,320.0 17.4,320.0 19.4,316.0 21.5,312.7 23.5,314.1 25.6,316.2 27.6,318.5 29.7,320.9 31.7,316.2 33.8,310.2 35.8,309.7 37.9,308.5 39.9,306.0 42.0,305.2 44.0,308.3 46.1,308.4 48.1,308.2 50.2,313.1 52.2,317.5 54.2,322.7 56.3,326.0 58.3,327.8 60.4,329.1 62.4,331.2 64.5,333.2 66.5,335.2 68.6,335.6 70.6,336.3 72.7,336.1 74.7,335.4 76.8,334.5 78.8,333.3 80.9,329.8 82.9,326.9 85.0,326.1 87.0,323.8 89.1,321.7 91.1,318.4 93.2,314.9 95.2,310.0 97.3,303.7 99.3,297.0 101.4,291.7 103.4,288.5 105.4,283.4 107.5,276.7 109.5,270.8 111.6,266.1 113.6,261.1 115.7,258.1 117.7,255.2 119.8,254.7 121.8,254.6 123.9,253.7 125.9,253.2 128.0,251.6 130.0,249.3 132.1,241.7 134.1,235.8 136.2,231.3 138.2,223.9 140.3,216.4 142.3,210.2 144.4,205.4 146.4,200.5 148.5,197.1 150.5,195.2 152.6,194.2 154.6,193.7 156.6,194.2 158.7,194.2 160.7,193.5 162.8,193.1 164.8,194.0 166.9,197.2 168.9,200.0 171.0,202.5 173.0,204.6 175.1,206.1 177.1,207.1 179.2,211.8 181.2,215.4 183.3,215.7 185.3,218.0 187.4,217.9 189.4,217.0 191.5,212.6 193.5,210.8 195.6,211.0 197.6,211.3 199.7,213.8 201.7,216.4 203.8,218.3 205.8,219.9 207.8,220.9 209.9,219.6 211.9,216.6 214.0,212.5 216.0,207.6 218.1,203.9 220.1,201.2 222.2,199.2 224.2,197.6 226.3,197.2 228.3,195.3 230.4,195.2 232.4,192.2 234.5,186.1 236.5,187.1 238.6,188.1 240.6,187.5 242.7,184.2 244.7,176.1 246.8,164.7 248.8,156.2 250.9,150.1 252.9,144.2 255.0,140.3 257.0,136.5 259.0,134.0 261.1,132.3 263.1,129.7 265.2,128.5 267.2,128.7 269.3,129.3 271.3,128.2 273.4,126.3 275.4,126.3 277.5,127.8 279.5,130.7 281.6,137.6 283.6,143.6 285.7,148.4 287.7,153.3 289.8,157.6 291.8,156.4 293.9,155.5 295.9,157.9 298.0,160.1 300.0,157.7 302.1,157.5 304.1,157.0 306.2,155.7 308.2,154.8 310.2,154.2 312.3,155.4 314.3,156.1 316.4,156.9 318.4,158.5 320.5,160.8 322.5,163.9 324.6,166.5 326.6,168.7 328.7,169.2 330.7,165.4 332.8,161.5 334.8,159.0 336.9,157.2 338.9,156.0 341.0,159.3 343.0,163.2 345.1,167.0 347.1,167.6 349.2,168.4 351.2,168.8 353.3,170.1 355.3,174.5 357.4,178.5 359.4,181.4 361.4,183.0 363.5,183.4 365.5,185.1 367.6,185.7 369.6,188.3 371.7,191.1 373.7,193.9 375.8,196.6 377.8,199.7 379.9,212.2 381.9,221.9 384.0,230.3 386.0,233.6 388.1,238.0 390.1,243.2 392.2,245.0 394.2,245.5 396.3,246.0 398.3,246.5 400.4,247.1 402.4,247.2 404.5,247.0 406.5,246.9 408.6,247.9 410.6,245.7 412.6,243.1 414.7,241.2 416.7,237.3 418.8,234.7 420.8,232.8 422.9,231.4 424.9,228.2 427.0,225.8 429.0,223.9 431.1,220.7 433.1,217.8 435.2,213.3 437.2,208.2 439.3,205.0 441.3,203.1 443.4,203.0 445.4,203.1 447.5,203.4 449.5,203.7 451.6,204.7 453.6,205.1 455.7,205.1 457.7,204.3 459.8,202.8 461.8,200.6 463.8,201.6 465.9,202.5 467.9,200.7 470.0,200.8 472.0,199.9 474.1,196.5 476.1,192.2 478.2,186.4 480.2,184.0 482.3,183.3 484.3,186.0 486.4,185.1 488.4,188.1 490.5,192.1 492.5,195.7 494.6,200.7 496.6,205.1 498.7,209.5 500.7,213.6 502.8,215.9 504.8,217.7 506.9,219.4 508.9,220.9 511.0,220.2 513.0,219.6 515.0,219.4 517.1,216.0 519.1,211.1 521.2,208.6 523.2,205.5 525.3,206.5 527.3,204.8 529.4,203.0 531.4,199.7 533.5,195.0 535.5,190.4 537.6,185.7 539.6,181.1 541.7,177.7 543.7,176.7 545.8,174.9 547.8,171.6 549.9,168.9 551.9,165.1 554.0,161.1 556.0,155.4 558.1,150.7 560.1,148.4 562.2,145.4 564.2,143.3 566.2,140.9 568.3,140.2 570.3,139.3 572.4,138.8 574.4,138.5 576.5,140.6 578.5,141.1 580.6,141.9 582.6,144.3 584.7,145.3 586.7,146.0 588.8,146.4 590.8,147.5 592.9,147.5 594.9,146.7 597.0,149.0 599.0,150.1 601.1,151.2 603.1,152.0 605.2,152.4 607.2,151.5 609.3,150.9 611.3,148.1 613.4,146.0 615.4,140.4 617.4,136.5 619.5,133.2 621.5,130.9 623.6,134.1 625.6,143.7 627.7,150.4 629.7,155.0 631.8,158.5 633.8,161.5 635.9,164.2 637.9,169.3 640.0,170.7 642.0,170.0 644.1,168.5 646.1,166.4 648.2,162.7 650.2,159.0 652.3,156.2 654.3,153.7 656.4,151.8 658.4,151.6 660.5,151.3 662.5,150.9 664.6,150.7 666.6,150.8 668.6,152.4 670.7,148.2 672.7,144.5 674.8,140.3 676.8,137.0 678.9,132.6 680.9,128.6 683.0,124.2 685.0,121.4 687.1,115.2 689.1,106.2 691.2,100.2 693.2,95.7 695.3,93.4 697.3,91.3 699.4,88.8 701.4,85.1 703.5,81.3 705.5,78.9 707.6,77.6 709.6,78.4 711.7,79.1 713.7,78.5 715.8,80.0 717.8,82.0 719.8,86.3 721.9,89.5 723.9,93.6 726.0,98.1 728.0,101.9 730.1,105.8 732.1,109.2 734.2,108.6 736.2,109.7 738.3,116.7 740.3,122.4 742.4,126.2 744.4,129.9 746.5,134.2 748.5,137.4 750.6,139.8 752.6,141.6 754.7,143.8 756.7,147.3 758.8,151.4 760.8,153.8 762.9,155.8 764.9,156.6 767.0,157.2 769.0,157.7 771.0,155.6 773.1,154.0 775.1,157.7 777.2,162.8 779.2,166.1 781.3,168.0 783.3,169.5 785.4,170.6 787.4,172.5 789.5,179.0 791.5,185.9 793.6,191.7 795.6,193.5 797.7,195.1 799.7,194.4 801.8,194.0 803.8,194.9 805.9,192.9 807.9,192.8 810.0,193.2 812.0,193.7 814.1,194.0 816.1,193.6 818.2,193.1 820.2,189.9 822.2,186.5 824.3,182.2 826.3,180.6 828.4,178.3 830.4,175.6 832.5,172.7 834.5,168.3 836.6,165.5 838.6,163.0 840.7,160.2 842.7,156.9 844.8,152.8 846.8,150.0 848.9,148.5 850.9,146.2 853.0,144.8 855.0,143.5 857.1,140.5 859.1,141.8 861.2,140.3 863.2,138.3 865.3,136.1 867.3,134.1 869.4,129.9 871.4,126.2 873.4,122.1 875.5,119.0 877.5,115.7 879.6,111.7 881.6,113.8 883.7,115.2 885.7,114.4 887.8,113.9 889.8,116.8 891.9,119.0 893.9,120.6 896.0,121.0 898.0,120.9 900.1,120.3 902.1,118.0 904.2,114.8 906.2,113.0 908.3,111.2 910.3,109.2 912.4,107.8 914.4,107.0 916.5,106.9 918.5,106.6 920.6,105.0 922.6,103.0 924.6,101.3 926.7,100.3 928.7,98.4 930.8,98.1 932.8,100.9 934.9,103.9 936.9,106.4 939.0,107.1 941.0,106.7 943.1,106.4 945.1,105.5 947.2,103.7 949.2,102.1 951.3,101.1 953.3,99.5 955.4,96.5 957.4,93.5 959.5,90.2 961.5,87.8 963.6,86.0 965.6,84.3 967.7,83.1 969.7,84.1 971.8,82.7 973.8,80.7 975.8,79.2 977.9,78.5 979.9,77.6 982.0,76.2 984.0,74.5 986.1,72.4 988.1,68.6 990.2,65.8 992.2,62.8 994.3,59.7 996.3,56.9 998.4,53.8 1000.4,53.0 1002.5,52.5 1004.5,52.1 1006.6,52.1 1008.6,51.3 1010.7,50.4 1012.7,50.1 1014.8,50.6 1016.8,52.9 1018.9,53.4 1020.9,52.6 1023.0,50.9 1025.0,51.7 1027.0,51.9 1029.1,50.5 1031.1,48.8" fill="none" stroke="#1a1a50" stroke-width="1.05" />
<path d="M231.2 112.5L1032.5 27.5M877.5 95.5L959.5 78" stroke="#111" stroke-width="1.2" fill="none"/>
</g>
<g clip-path="url(#c2)">
<polyline points="1.0,509.0 3.0,501.2 5.1,506.7 7.1,513.4 9.2,519.6 11.2,518.1 13.3,514.7 15.3,511.5 17.4,515.6 19.4,501.5 21.5,501.1 23.5,520.8 25.6,524.3 27.6,526.7 29.7,529.1 31.7,506.8 33.8,501.5 35.8,516.9 37.9,515.0 39.9,511.1 42.0,515.1 44.0,526.9 46.1,520.1 48.1,519.4 50.2,533.2 52.2,534.4 54.2,538.6 56.3,535.6 58.3,532.6 60.4,532.1 62.4,535.1 64.5,536.2 66.5,537.3 68.6,532.4 70.6,533.3 72.7,530.3 74.7,527.4 76.8,525.7 78.8,523.8 80.9,512.5 82.9,512.5 85.0,519.8 87.0,513.4 89.1,511.9 91.1,505.7 93.2,503.0 95.2,495.9 97.3,490.1 99.3,486.3 101.4,487.1 103.4,493.6 105.4,487.5 107.5,482.6 109.5,481.7 111.6,481.5 113.6,479.4 115.7,486.3 117.7,485.2 119.8,496.9 121.8,499.2 123.9,496.5 125.9,498.2 128.0,494.2 130.0,491.3 132.1,479.2 134.1,480.8 136.2,481.6 138.2,475.6 140.3,473.5 142.3,473.3 144.4,474.2 146.4,472.7 148.5,477.3 150.5,482.9 152.6,486.6 154.6,489.4 156.6,495.8 158.7,494.6 160.7,492.2 162.8,493.2 164.8,503.1 166.9,519.1 168.9,520.6 171.0,522.0 173.0,522.8 175.1,521.2 177.1,520.4 179.2,541.7 181.2,540.9 183.3,524.9 185.3,534.1 187.4,524.6 189.4,521.1 191.5,506.9 193.5,515.0 195.6,522.2 197.6,522.7 199.7,531.6 201.7,533.9 203.8,532.7 205.8,533.2 207.8,531.8 209.9,521.4 211.9,512.8 214.0,507.0 216.0,501.8 218.1,502.5 220.1,504.8 222.2,505.5 224.2,505.5 226.3,511.4 228.3,504.5 230.4,513.9 232.4,502.5 234.5,492.5 236.5,518.7 238.6,519.2 240.6,514.8 242.7,507.1 244.7,495.4 246.8,487.8 248.8,490.5 250.9,493.2 252.9,491.5 255.0,495.2 257.0,493.8 259.0,496.1 261.1,497.9 263.1,495.0 265.2,499.4 267.2,504.9 269.3,507.3 271.3,502.5 273.4,499.8 275.4,507.4 277.5,514.4 279.5,521.8 281.6,536.8 283.6,538.2 285.7,538.2 287.7,541.6 289.8,542.7 291.8,522.9 293.9,523.4 295.9,533.8 298.0,534.6 300.0,519.8 302.1,525.6 304.1,524.3 306.2,521.3 308.2,521.8 310.2,522.3 312.3,528.7 314.3,527.6 316.4,528.7 318.4,532.8 320.5,536.7 322.5,541.4 324.6,541.8 326.6,542.3 328.7,534.5 330.7,514.5 332.8,511.8 334.8,514.3 336.9,515.7 338.9,517.1 341.0,536.1 343.0,540.4 345.1,542.9 347.1,530.5 349.2,531.5 351.2,530.9 353.3,534.5 355.3,546.5 357.4,547.6 359.4,546.2 361.4,541.3 363.5,536.7 365.5,541.9 367.6,537.5 369.6,545.3 371.7,547.7 373.7,549.3 375.8,551.0 377.8,553.8 379.9,572.7 381.9,570.6 384.0,571.4 386.0,553.9 388.1,557.2 390.1,560.1 392.2,549.7 394.2,545.4 396.3,545.5 398.3,546.0 400.4,546.4 402.4,544.7 404.5,542.7 406.5,543.3 408.6,546.8 410.6,530.4 412.6,526.3 414.7,527.4 416.7,516.9 418.8,519.3 420.8,519.9 422.9,520.6 424.9,511.5 427.0,511.9 429.0,512.3 431.1,505.2 433.1,503.7 435.2,495.5 437.2,491.4 439.3,496.8 441.3,502.0 443.4,510.9 445.4,512.3 447.5,513.8 449.5,513.8 451.6,519.3 453.6,517.1 455.7,514.8 457.7,510.5 459.8,505.5 461.8,500.9 463.8,520.9 465.9,521.7 467.9,508.5 470.0,518.3 472.0,513.6 474.1,503.4 476.1,498.2 478.2,491.9 480.2,504.5 482.3,510.7 484.3,524.4 486.4,514.0 488.4,526.9 490.5,531.6 492.5,532.7 494.6,538.6 496.6,540.0 498.7,542.0 500.7,543.7 502.8,539.0 504.8,539.0 506.9,539.9 508.9,540.3 511.0,530.4 513.0,529.8 515.0,531.5 517.1,516.3 519.1,508.2 521.2,515.4 523.2,511.4 525.3,526.2 527.3,517.3 529.4,515.7 531.4,509.8 533.5,504.2 535.5,501.9 537.6,499.5 539.6,497.2 541.7,499.2 543.7,507.7 545.8,504.6 547.8,499.5 549.9,499.2 551.9,494.8 554.0,492.2 556.0,486.7 558.1,486.4 560.1,495.7 562.2,492.5 564.2,494.8 566.2,492.8 568.3,500.7 570.3,499.5 572.4,501.1 574.4,502.0 576.5,516.2 578.5,511.3 580.6,513.5 582.6,523.2 584.7,519.0 586.7,518.3 588.8,517.7 590.8,522.3 592.9,517.4 594.9,513.5 597.0,530.0 599.0,525.8 601.1,527.2 603.1,526.4 605.2,525.6 607.2,517.3 609.3,519.0 611.3,506.8 613.4,507.7 615.4,493.3 617.4,496.8 619.5,496.3 621.5,499.2 623.6,527.6 625.6,549.0 627.7,545.1 629.7,541.3 631.8,540.7 633.8,541.5 635.9,542.3 637.9,550.5 640.0,537.8 642.0,530.4 644.1,526.5 646.1,523.1 648.2,515.6 650.2,513.5 652.3,514.1 654.3,513.2 656.4,513.8 658.4,520.3 660.5,519.7 662.5,519.1 664.6,519.8 666.6,521.3 668.6,530.0 670.7,505.3 672.7,504.5 674.8,500.1 676.8,500.9 678.9,495.4 680.9,494.0 683.0,490.9 685.0,495.2 687.1,485.5 689.1,478.5 691.2,485.7 693.2,487.1 695.3,495.0 697.3,494.4 699.4,492.2 701.4,488.2 703.5,486.5 705.5,490.6 707.6,494.7 709.6,505.3 711.7,506.0 713.7,502.0 715.8,513.5 717.8,517.4 719.8,529.3 721.9,528.7 723.9,534.8 726.0,539.5 728.0,539.9 730.1,543.2 732.1,544.6 734.2,526.0 736.2,532.2 738.3,550.6 740.3,550.6 742.4,546.8 744.4,548.8 746.5,552.0 748.5,551.0 750.6,549.9 752.6,549.1 754.7,551.4 756.7,556.5 758.8,560.0 760.8,553.2 762.9,553.6 764.9,548.4 767.0,547.9 769.0,547.4 771.0,531.3 773.1,531.3 775.1,550.6 777.2,556.1 779.2,551.6 781.3,547.2 783.3,546.8 785.4,546.4 787.4,549.9 789.5,562.8 791.5,566.0 793.6,566.5 795.6,549.4 797.7,549.8 799.7,539.9 801.8,540.3 803.8,544.0 805.9,530.9 807.9,536.2 810.0,537.9 812.0,538.4 814.1,537.7 816.1,534.1 818.2,533.4 820.2,518.7 822.2,515.4 824.3,508.9 826.3,518.7 828.4,514.1 830.4,511.2 832.5,508.4 834.5,501.1 836.6,505.5 838.6,504.6 840.7,501.5 842.7,498.1 844.8,493.5 846.8,496.9 848.9,502.1 850.9,498.1 853.0,501.8 855.0,500.8 857.1,493.8 859.1,516.5 861.2,507.5 863.2,504.7 865.3,503.1 867.3,501.9 869.4,494.6 871.4,493.6 873.4,490.6 875.5,491.5 877.5,489.4 879.6,485.9 881.6,515.8 883.7,514.9 885.7,508.5 887.8,509.2 889.8,523.8 891.9,523.3 893.9,522.7 896.0,519.0 898.0,517.4 900.1,514.7 902.1,507.7 904.2,502.8 906.2,507.3 908.3,505.9 910.3,504.0 912.4,504.8 914.4,507.5 916.5,511.1 918.5,510.4 920.6,503.2 922.6,500.5 924.6,499.9 926.7,503.3 928.7,498.0 930.8,508.6 932.8,527.8 934.9,531.6 936.9,532.3 939.0,524.5 941.0,518.9 943.1,518.9 945.1,515.3 947.2,509.3 949.2,508.7 951.3,510.7 953.3,506.5 955.4,498.2 957.4,495.6 959.5,492.2 961.5,494.6 963.6,495.8 965.6,494.7 967.7,496.0 969.7,515.1 971.8,503.1 973.8,499.2 975.8,500.3 977.9,504.7 979.9,502.8 982.0,499.7 984.0,496.7 986.1,493.2 988.1,485.8 990.2,487.1 992.2,484.7 994.3,482.5 996.3,481.3 998.4,478.7 1000.4,496.8 1002.5,497.4 1004.5,498.0 1006.6,500.6 1008.6,496.7 1010.7,495.4 1012.7,499.7 1014.8,507.9 1016.8,525.3 1018.9,515.1 1020.9,508.7 1023.0,503.7 1025.0,519.2 1027.0,516.4 1029.1,508.8 1031.1,505.9" fill="none" stroke="#1a1a80" stroke-width="1.05" />
</g>
<g clip-path="url(#c3)">
<path d="M0 681h2V683h-2z M2 680h2V683h-2z M4 680h2V683h-2z M6 682h2V683h-2z M8 683h2V685h-2z M10 683h2V686h-2z M12 683h2V687h-2z M14 683h2V686h-2z M16 683h2V687h-2z M20 682h3V683h-3z M23 683h2V684h-2z M25 683h2V687h-2z M27 683h2V689h-2z M29 683h2V691h-2z M31 683h2V686h-2z M33 681h2V683h-2z M35 682h2V683h-2z M37 682h2V683h-2z M39 681h2V683h-2z M41 682h2V683h-2z M43 683h2V685h-2z M45 683h2V686h-2z M47 683h2V686h-2z M49 683h2V690h-2z M51 683h2V693h-2z M53 683h2V696h-2z M55 683h2V697h-2z M57 683h2V696h-2z M59 683h2V694h-2z M61 683h2V694h-2z M63 683h3V693h-3z M66 683h2V692h-2z M68 683h2V690h-2z M70 683h2V689h-2z M72 683h2V687h-2z M74 683h2V685h-2z M78 682h2V683h-2z M80 679h2V683h-2z M82 677h2V683h-2z M84 677h2V683h-2z M86 676h2V683h-2z M88 676h2V683h-2z M90 674h2V683h-2z M92 673h2V683h-2z M94 671h2V683h-2z M96 669h2V683h-2z M98 666h2V683h-2z M100 666h2V683h-2z M102 668h2V683h-2z M104 668h2V683h-2z M106 666h3V683h-3z M109 666h2V683h-2z M111 667h2V683h-2z M113 668h2V683h-2z M115 671h2V683h-2z M117 673h2V683h-2z M119 677h2V683h-2z M121 680h2V683h-2z M123 682h2V683h-2z M125 683h2V684h-2z M127 683h2V685h-2z M129 683h2V685h-2z M131 680h2V683h-2z M133 678h2V683h-2z M135 677h2V683h-2z M137 675h2V683h-2z M139 673h2V683h-2z M141 672h2V683h-2z M143 673h2V683h-2z M145 674h2V683h-2z M147 676h3V683h-3z M150 679h2V683h-2z M152 682h2V683h-2z M154 683h2V685h-2z M156 683h2V688h-2z M158 683h2V690h-2z M160 683h2V691h-2z M162 683h2V692h-2z M164 683h2V693h-2z M166 683h2V696h-2z M168 683h2V698h-2z M170 683h2V699h-2z M172 683h2V700h-2z M174 683h2V699h-2z M176 683h2V698h-2z M178 683h2V701h-2z M180 683h2V701h-2z M182 683h2V699h-2z M184 683h2V698h-2z M186 683h2V696h-2z M188 683h2V693h-2z M190 683h3V688h-3z M193 683h2V686h-2z M195 683h2V686h-2z M197 683h2V686h-2z M199 683h2V688h-2z M201 683h2V689h-2z M203 683h2V690h-2z M205 683h2V690h-2z M207 683h2V690h-2z M209 683h2V687h-2z M211 683h2V684h-2z M213 680h2V683h-2z M215 677h2V683h-2z M217 675h2V683h-2z M219 675h2V683h-2z M221 675h2V683h-2z M223 676h2V683h-2z M225 678h2V683h-2z M227 678h2V683h-2z M229 679h2V683h-2z M231 678h2V683h-2z M233 675h3V683h-3z M236 678h2V683h-2z M238 681h2V683h-2z M240 682h2V683h-2z M242 680h2V683h-2z M244 675h2V683h-2z M246 668h2V683h-2z M248 665h2V683h-2z M250 665h2V683h-2z M252 666h2V683h-2z M254 668h2V683h-2z M256 670h2V683h-2z M258 673h2V683h-2z M260 676h2V683h-2z M262 678h2V683h-2z M264 680h2V683h-2z M268 683h2V686h-2z M270 683h2V687h-2z M272 683h2V687h-2z M274 683h2V688h-2z M276 683h3V691h-3z M279 683h2V694h-2z M281 683h2V699h-2z M283 683h2V703h-2z M285 683h2V704h-2z M287 683h2V705h-2z M289 683h2V705h-2z M291 683h2V700h-2z M293 683h2V697h-2z M295 683h2V696h-2z M297 683h2V696h-2z M299 683h2V691h-2z M301 683h2V689h-2z M303 683h2V688h-2z M305 683h2V686h-2z M307 683h2V684h-2z M309 683h2V684h-2z M311 683h2V684h-2z M313 683h2V685h-2z M315 683h2V685h-2z M317 683h2V686h-2z M319 683h3V687h-3z M322 683h2V689h-2z M324 683h2V690h-2z M326 683h2V690h-2z M328 683h2V688h-2z M330 683h2V684h-2z M332 680h2V683h-2z M334 678h2V683h-2z M336 677h2V683h-2z M338 677h2V683h-2z M340 681h2V683h-2z M342 683h2V685h-2z M344 683h2V688h-2z M346 683h2V687h-2z M348 683h2V686h-2z M350 683h2V686h-2z M352 683h2V686h-2z M354 683h2V689h-2z M356 683h2V691h-2z M358 683h2V691h-2z M360 683h2V690h-2z M362 683h3V688h-3z M365 683h2V688h-2z M367 683h2V687h-2z M369 683h2V687h-2z M371 683h2V688h-2z M373 683h2V688h-2z M375 683h2V689h-2z M377 683h2V689h-2z M379 683h2V697h-2z M381 683h2V701h-2z M383 683h2V703h-2z M385 683h2V700h-2z M387 683h2V698h-2z M389 683h2V697h-2z M391 683h2V694h-2z M393 683h2V689h-2z M395 683h2V686h-2z M399 681h2V683h-2z M401 679h2V683h-2z M403 678h3V683h-3z M406 677h2V683h-2z M408 677h2V683h-2z M410 674h2V683h-2z M412 672h2V683h-2z M414 671h2V683h-2z M416 668h2V683h-2z M418 668h2V683h-2z M420 668h2V683h-2z M422 669h2V683h-2z M424 668h2V683h-2z M426 668h2V683h-2z M428 669h2V683h-2z M430 669h2V683h-2z M432 669h2V683h-2z M434 668h2V683h-2z M436 667h2V683h-2z M438 668h2V683h-2z M440 670h2V683h-2z M442 673h2V683h-2z M444 676h2V683h-2z M446 678h3V683h-3z M449 680h2V683h-2z M451 682h2V683h-2z M453 683h2V684h-2z M455 683h2V684h-2z M457 683h2V684h-2z M461 682h2V683h-2z M463 683h2V684h-2z M465 683h2V685h-2z M467 683h2V684h-2z M469 683h2V684h-2z M471 683h2V684h-2z M473 682h2V683h-2z M475 679h2V683h-2z M477 676h2V683h-2z M479 676h2V683h-2z M481 678h2V683h-2z M483 682h2V683h-2z M487 683h2V686h-2z M489 683h3V690h-3z M492 683h2V692h-2z M494 683h2V695h-2z M496 683h2V697h-2z M498 683h2V698h-2z M500 683h2V699h-2z M502 683h2V697h-2z M504 683h2V696h-2z M506 683h2V694h-2z M508 683h2V693h-2z M510 683h2V690h-2z M512 683h2V687h-2z M514 683h2V686h-2z M516 682h2V683h-2z M518 677h2V683h-2z M520 676h2V683h-2z M522 674h2V683h-2z M524 677h2V683h-2z M526 676h2V683h-2z M528 676h2V683h-2z M530 675h2V683h-2z M532 673h3V683h-3z M535 671h2V683h-2z M537 670h2V683h-2z M539 669h2V683h-2z M541 670h2V683h-2z M543 673h2V683h-2z M545 674h2V683h-2z M547 674h2V683h-2z M549 675h2V683h-2z M551 675h2V683h-2z M553 674h2V683h-2z M555 673h2V683h-2z M557 672h2V683h-2z M559 674h2V683h-2z M561 675h2V683h-2z M563 677h2V683h-2z M565 678h2V683h-2z M567 681h2V683h-2z M569 682h2V683h-2z M571 683h2V684h-2z M573 683h2V686h-2z M575 683h3V689h-3z M578 683h2V690h-2z M580 683h2V691h-2z M582 683h2V693h-2z M584 683h2V693h-2z M586 683h2V693h-2z M588 683h2V693h-2z M590 683h2V693h-2z M592 683h2V692h-2z M594 683h2V690h-2z M596 683h2V692h-2z M598 683h2V692h-2z M600 683h2V691h-2z M602 683h2V691h-2z M604 683h2V690h-2z M606 683h2V688h-2z M608 683h2V687h-2z M610 683h2V684h-2z M614 678h2V683h-2z M616 676h2V683h-2z M618 676h3V683h-3z M621 676h2V683h-2z M623 681h2V683h-2z M625 683h2V690h-2z M627 683h2V695h-2z M629 683h2V697h-2z M631 683h2V697h-2z M633 683h2V697h-2z M635 683h2V696h-2z M637 683h2V698h-2z M639 683h2V695h-2z M641 683h2V692h-2z M643 683h2V688h-2z M645 683h2V685h-2z M647 680h2V683h-2z M649 677h2V683h-2z M651 676h2V683h-2z M653 675h2V683h-2z M655 675h2V683h-2z M657 676h2V683h-2z M659 677h3V683h-3z M662 678h2V683h-2z M664 679h2V683h-2z M666 680h2V683h-2z M668 682h2V683h-2z M670 679h2V683h-2z M672 677h2V683h-2z M674 675h2V683h-2z M676 674h2V683h-2z M678 673h2V683h-2z M680 672h2V683h-2z M682 671h2V683h-2z M684 672h2V683h-2z M686 670h2V683h-2z M688 666h2V683h-2z M690 666h2V683h-2z M692 667h2V683h-2z M694 671h2V683h-2z M696 673h2V683h-2z M698 675h2V683h-2z M700 676h2V683h-2z M702 676h3V683h-3z M705 678h2V683h-2z M707 680h2V683h-2z M709 683h2V684h-2z M711 683h2V686h-2z M713 683h2V687h-2z M715 683h2V690h-2z M717 683h2V692h-2z M719 683h2V696h-2z M721 683h2V698h-2z M723 683h2V700h-2z M725 683h2V701h-2z M727 683h2V702h-2z M729 683h2V702h-2z M731 683h2V702h-2z M733 683h2V698h-2z M735 683h2V696h-2z M737 683h2V700h-2z M739 683h2V701h-2z M741 683h2V700h-2z M743 683h2V700h-2z M745 683h3V699h-3z M748 683h2V698h-2z M750 683h2V696h-2z M752 683h2V694h-2z M754 683h2V692h-2z M756 683h2V692h-2z M758 683h2V692h-2z M760 683h2V691h-2z M762 683h2V690h-2z M764 683h2V687h-2z M766 683h2V685h-2z M768 683h2V684h-2z M770 680h2V683h-2z M772 678h2V683h-2z M774 681h2V683h-2z M776 683h2V684h-2z M778 683h2V685h-2z M780 683h2V685h-2z M782 683h2V684h-2z M788 683h3V687h-3z M791 683h2V691h-2z M793 683h2V692h-2z M795 683h2V690h-2z M797 683h2V688h-2z M799 683h2V685h-2z M801 682h2V683h-2z M803 681h2V683h-2z M805 678h2V683h-2z M807 677h2V683h-2z M809 677h2V683h-2z M811 677h2V683h-2z M813 677h2V683h-2z M815 676h2V683h-2z M817 676h2V683h-2z M819 673h2V683h-2z M821 671h2V683h-2z M823 669h2V683h-2z M825 670h2V683h-2z M827 670h2V683h-2z M829 670h2V683h-2z M831 670h3V683h-3z M834 668h2V683h-2z M836 669h2V683h-2z M838 670h2V683h-2z M840 670h2V683h-2z M842 671h2V683h-2z M844 670h2V683h-2z M846 671h2V683h-2z M848 673h2V683h-2z M850 674h2V683h-2z M852 676h2V683h-2z M854 677h2V683h-2z M856 677h2V683h-2z M858 681h2V683h-2z M860 681h2V683h-2z M862 681h2V683h-2z M864 681h2V683h-2z M866 681h2V683h-2z M868 679h2V683h-2z M870 678h2V683h-2z M872 677h2V683h-2z M874 677h3V683h-3z M877 677h2V683h-2z M879 677h2V683h-2z M881 681h2V683h-2z M883 683h2V685h-2z M885 683h2V685h-2z M887 683h2V686h-2z M889 683h2V689h-2z M891 683h2V691h-2z M893 683h2V692h-2z M895 683h2V692h-2z M897 683h2V691h-2z M899 683h2V690h-2z M901 683h2V688h-2z M903 683h2V685h-2z M905 683h2V684h-2z M911 682h2V683h-2z M915 683h3V684h-3z M918 683h2V684h-2z M920 683h2V684h-2z M924 682h2V683h-2z M928 682h2V683h-2z M932 683h2V686h-2z M934 683h2V689h-2z M936 683h2V691h-2z M938 683h2V691h-2z M940 683h2V689h-2z M942 683h2V688h-2z M944 683h2V687h-2z M946 683h2V685h-2z M948 683h2V684h-2z M954 681h2V683h-2z M956 679h2V683h-2z M958 678h3V683h-3z M961 678h2V683h-2z M963 678h2V683h-2z M965 678h2V683h-2z M967 679h2V683h-2z M969 682h2V683h-2z M971 682h2V683h-2z M973 681h2V683h-2z M975 681h2V683h-2z M977 682h2V683h-2z M979 682h2V683h-2z M981 682h2V683h-2z M983 682h2V683h-2z M985 681h2V683h-2z M987 680h2V683h-2z M989 679h2V683h-2z M991 678h2V683h-2z M993 678h2V683h-2z M995 678h2V683h-2z M997 678h2V683h-2z M999 680h2V683h-2z M1001 681h3V683h-3z M1006 683h2V684h-2z M1008 683h2V685h-2z M1010 683h2V685h-2z M1012 683h2V686h-2z M1014 683h2V687h-2z M1016 683h2V689h-2z M1018 683h2V690h-2z M1020 683h2V689h-2z M1022 683h2V687h-2z M1024 683h2V688h-2z M1026 683h2V688h-2z M1028 683h2V687h-2z M1030 683h2V685h-2z" fill="#cc6699" shape-rendering="crispEdges"/>
<polyline points="1.0,656.6 3.0,654.8 5.1,654.9 7.1,656.6 9.2,659.7 11.2,661.9 13.3,663.1 15.3,663.4 17.4,664.6 19.4,661.5 21.5,659.2 23.5,662.1 25.6,665.5 27.6,669.0 29.7,672.7 31.7,668.5 33.8,663.1 35.8,663.5 37.9,663.3 39.9,661.8 42.0,662.1 44.0,666.5 46.1,667.6 48.1,668.4 50.2,674.6 52.2,680.0 54.2,686.2 56.3,690.0 58.3,692.0 60.4,693.4 62.4,695.4 64.5,697.2 66.5,698.9 68.6,698.8 70.6,698.9 72.7,698.0 74.7,696.6 76.8,694.9 78.8,693.0 80.9,688.6 82.9,685.1 85.0,683.8 87.0,681.2 89.1,678.8 91.1,675.2 93.2,671.7 95.2,666.6 97.3,660.5 99.3,654.0 101.4,649.5 103.4,647.3 105.4,643.3 107.5,637.9 109.5,633.7 111.6,630.7 113.6,627.9 115.7,627.3 117.7,627.0 119.8,629.2 121.8,632.0 123.9,633.8 125.9,636.1 128.0,637.1 130.0,637.3 132.1,631.8 134.1,628.4 136.2,626.5 138.2,621.6 140.3,616.8 142.3,613.6 144.4,612.1 146.4,610.5 148.5,610.7 150.5,612.5 152.6,615.3 154.6,618.6 156.6,622.9 158.7,626.5 160.7,629.2 162.8,632.1 164.8,636.2 166.9,642.7 168.9,648.5 171.0,653.7 173.0,658.3 175.1,661.8 177.1,664.7 179.2,671.4 181.2,676.6 183.3,677.9 185.3,681.2 187.4,681.7 189.4,681.4 191.5,677.1 193.5,675.7 195.6,676.4 197.6,677.2 199.7,680.3 201.7,683.4 203.8,685.6 205.8,687.4 207.8,688.5 209.9,687.1 211.9,683.8 214.0,679.4 216.0,674.3 218.1,670.5 220.1,668.1 222.2,666.6 224.2,665.5 226.3,665.8 228.3,664.5 230.4,665.3 232.4,663.0 234.5,657.5 236.5,659.7 238.6,661.9 240.6,662.4 242.7,660.0 244.7,652.6 246.8,641.8 248.8,634.5 250.9,630.1 252.9,626.2 255.0,624.7 257.0,623.4 259.0,623.6 261.1,624.9 263.1,625.2 265.2,627.0 267.2,630.3 269.3,634.0 271.3,635.7 273.4,636.5 275.4,639.3 277.5,643.6 279.5,649.3 281.6,658.9 283.6,667.3 285.7,674.0 287.7,680.6 289.8,686.2 291.8,685.4 293.9,685.0 295.9,687.9 298.0,690.5 300.0,687.9 302.1,687.8 304.1,687.2 306.2,685.8 308.2,684.8 310.2,684.1 312.3,685.3 314.3,685.9 316.4,686.7 318.4,688.3 320.5,690.6 322.5,693.6 324.6,696.0 326.6,697.8 328.7,697.8 330.7,693.1 332.8,688.4 334.8,685.3 336.9,683.0 338.9,681.6 341.0,685.0 343.0,689.0 345.1,692.8 347.1,693.1 349.2,693.4 351.2,693.4 353.3,694.2 355.3,698.5 357.4,702.1 359.4,704.4 361.4,705.1 363.5,704.5 365.5,705.3 367.6,704.9 369.6,706.5 371.7,708.4 373.7,710.1 375.8,711.6 377.8,713.5 379.9,725.4 381.9,733.8 384.0,740.5 386.0,741.5 388.1,743.5 390.1,746.1 392.2,745.0 394.2,742.4 396.3,739.7 398.3,737.2 400.4,734.7 402.4,731.9 404.5,728.7 406.5,725.9 408.6,724.3 410.6,719.3 412.6,714.1 414.7,709.9 416.7,703.8 418.8,699.3 420.8,695.8 422.9,693.0 424.9,688.5 427.0,685.0 429.0,682.4 431.1,678.5 433.1,675.2 435.2,670.3 437.2,665.1 439.3,662.0 441.3,660.7 443.4,661.3 445.4,662.4 447.5,663.6 449.5,664.8 451.6,666.9 453.6,668.2 455.7,669.1 457.7,669.1 459.8,668.3 461.8,666.8 463.8,668.8 465.9,670.6 467.9,669.4 470.0,670.3 472.0,670.1 474.1,667.3 476.1,663.6 478.2,658.3 480.2,656.9 482.3,657.4 484.3,661.6 486.4,661.8 488.4,666.1 490.5,671.5 492.5,676.3 494.6,682.3 496.6,687.6 498.7,692.5 500.7,696.9 502.8,699.1 504.8,700.7 506.9,702.0 508.9,702.9 511.0,701.4 513.0,699.9 515.0,698.9 517.1,694.5 519.1,688.5 521.2,685.4 523.2,681.7 525.3,682.5 527.3,680.5 529.4,678.5 531.4,674.9 533.5,670.1 535.5,665.5 537.6,661.1 539.6,656.9 541.7,654.4 543.7,654.4 545.8,653.7 547.8,651.6 549.9,650.2 551.9,647.7 554.0,645.2 556.0,640.9 558.1,637.9 560.1,637.7 562.2,636.7 564.2,636.8 566.2,636.7 568.3,638.4 570.3,639.9 572.4,641.8 574.4,643.9 576.5,648.4 578.5,651.1 580.6,654.0 582.6,658.5 584.7,661.4 586.7,663.7 588.8,665.6 590.8,668.1 592.9,669.4 594.9,669.7 597.0,673.1 599.0,675.1 601.1,677.1 603.1,678.5 605.2,679.6 607.2,679.0 609.3,678.9 611.3,676.3 613.4,674.4 615.4,669.0 617.4,665.4 619.5,662.6 621.5,661.1 623.6,665.5 625.6,676.6 627.7,684.5 629.7,689.7 631.8,693.6 633.8,696.8 635.9,699.4 637.9,704.3 640.0,705.1 642.0,703.6 644.1,701.2 646.1,698.1 648.2,693.3 650.2,688.7 652.3,685.2 654.3,682.1 656.4,679.9 658.4,679.5 660.5,679.1 662.5,678.7 664.6,678.6 666.6,678.8 668.6,680.7 670.7,676.2 672.7,672.6 674.8,668.4 676.8,665.4 678.9,661.4 680.9,658.0 683.0,654.4 685.0,652.5 687.1,647.3 689.1,639.2 691.2,634.7 693.2,632.0 695.3,632.0 697.3,632.2 699.4,632.1 701.4,630.7 703.5,629.4 705.5,629.6 707.6,631.1 709.6,634.7 711.7,638.3 713.7,640.3 715.8,644.6 717.8,649.2 719.8,655.9 721.9,661.4 723.9,667.6 726.0,673.9 728.0,679.1 730.1,684.1 732.1,688.5 734.2,688.2 736.2,689.6 738.3,697.2 740.3,703.1 742.4,706.6 744.4,709.9 746.5,713.6 748.5,715.8 750.6,717.1 752.6,717.5 754.7,718.3 756.7,720.3 758.8,723.0 760.8,723.6 762.9,723.7 764.9,722.5 767.0,721.1 769.0,719.4 771.0,715.2 773.1,711.6 775.1,713.7 777.2,717.3 779.2,718.9 781.3,719.0 783.3,718.6 785.4,717.8 787.4,717.8 789.5,722.8 791.5,728.1 793.6,732.1 795.6,731.5 797.7,730.6 799.7,727.4 801.8,724.6 803.8,723.0 805.9,718.6 807.9,716.3 810.0,714.6 812.0,713.1 814.1,711.5 816.1,709.2 818.2,707.0 820.2,701.9 822.2,696.9 824.3,691.1 826.3,688.4 828.4,685.1 830.4,681.7 832.5,678.2 834.5,673.3 836.6,670.3 838.6,667.9 840.7,665.2 842.7,662.3 844.8,658.6 846.8,656.5 848.9,656.0 850.9,654.7 853.0,654.6 855.0,654.6 857.1,652.7 859.1,655.6 861.2,655.6 863.2,654.9 865.3,654.1 867.3,653.5 869.4,650.6 871.4,648.4 873.4,645.8 875.5,644.4 877.5,642.9 879.6,640.7 881.6,645.1 883.7,648.7 885.7,649.9 887.8,651.3 889.8,656.3 891.9,660.4 893.9,663.7 896.0,665.6 898.0,666.9 900.1,667.4 902.1,666.1 904.2,663.8 906.2,663.1 908.3,662.3 910.3,661.4 912.4,661.1 914.4,661.5 916.5,662.6 918.5,663.5 920.6,662.9 922.6,662.0 924.6,661.4 926.7,661.5 928.7,660.7 930.8,661.7 932.8,665.8 934.9,670.1 936.9,673.8 939.0,675.4 941.0,675.7 943.1,676.0 945.1,675.6 947.2,674.3 949.2,673.2 951.3,672.7 953.3,671.6 955.4,669.0 957.4,666.5 959.5,663.8 961.5,662.1 963.6,661.2 965.6,660.5 967.7,660.3 969.7,662.6 971.8,662.2 973.8,661.2 975.8,660.8 977.9,661.2 979.9,661.4 982.0,661.2 984.0,660.6 986.1,659.5 988.1,656.8 990.2,655.2 992.2,653.5 994.3,651.7 996.3,650.3 998.4,648.6 1000.4,649.6 1002.5,650.8 1004.5,652.2 1006.6,653.9 1008.6,654.7 1010.7,655.5 1012.7,656.8 1014.8,658.9 1016.8,662.9 1018.9,664.8 1020.9,665.2 1023.0,664.7 1025.0,666.7 1027.0,668.0 1029.1,667.6 1031.1,666.8" fill="none" stroke="#669a98" stroke-width="1.05" />
<polyline points="1.0,659.2 3.0,658.3 5.1,657.6 7.1,657.4 9.2,657.9 11.2,658.7 13.3,659.6 15.3,660.3 17.4,661.2 19.4,661.2 21.5,660.8 23.5,661.1 25.6,662.0 27.6,663.4 29.7,665.2 31.7,665.9 33.8,665.3 35.8,665.0 37.9,664.6 39.9,664.1 42.0,663.7 44.0,664.2 46.1,664.9 48.1,665.6 50.2,667.4 52.2,669.9 54.2,673.2 56.3,676.5 58.3,679.6 60.4,682.4 62.4,685.0 64.5,687.4 66.5,689.7 68.6,691.5 70.6,693.0 72.7,694.0 74.7,694.5 76.8,694.6 78.8,694.3 80.9,693.1 82.9,691.5 85.0,690.0 87.0,688.2 89.1,686.3 91.1,684.1 93.2,681.6 95.2,678.6 97.3,675.0 99.3,670.8 101.4,666.5 103.4,662.7 105.4,658.8 107.5,654.6 109.5,650.4 111.6,646.5 113.6,642.8 115.7,639.7 117.7,637.1 119.8,635.6 121.8,634.8 123.9,634.6 125.9,634.9 128.0,635.4 130.0,635.7 132.1,635.0 134.1,633.6 136.2,632.2 138.2,630.1 140.3,627.4 142.3,624.7 144.4,622.2 146.4,619.8 148.5,618.0 150.5,616.9 152.6,616.6 154.6,617.0 156.6,618.1 158.7,619.8 160.7,621.7 162.8,623.8 164.8,626.3 166.9,629.6 168.9,633.3 171.0,637.4 173.0,641.6 175.1,645.6 177.1,649.5 179.2,653.8 181.2,658.4 183.3,662.3 185.3,666.1 187.4,669.2 189.4,671.6 191.5,672.7 193.5,673.3 195.6,673.9 197.6,674.6 199.7,675.7 201.7,677.3 203.8,678.9 205.8,680.6 207.8,682.2 209.9,683.2 211.9,683.3 214.0,682.5 216.0,680.9 218.1,678.8 220.1,676.7 222.2,674.7 224.2,672.8 226.3,671.4 228.3,670.1 230.4,669.1 232.4,667.9 234.5,665.8 236.5,664.6 238.6,664.0 240.6,663.7 242.7,663.0 244.7,660.9 246.8,657.1 248.8,652.6 250.9,648.1 252.9,643.7 255.0,639.9 257.0,636.6 259.0,634.0 261.1,632.2 263.1,630.8 265.2,630.0 267.2,630.1 269.3,630.9 271.3,631.8 273.4,632.8 275.4,634.1 277.5,636.0 279.5,638.6 281.6,642.7 283.6,647.6 285.7,652.9 287.7,658.4 289.8,664.0 291.8,668.3 293.9,671.6 295.9,674.9 298.0,678.0 300.0,680.0 302.1,681.5 304.1,682.7 306.2,683.3 308.2,683.6 310.2,683.7 312.3,684.0 314.3,684.4 316.4,684.9 318.4,685.5 320.5,686.5 322.5,688.0 324.6,689.6 326.6,691.2 328.7,692.5 330.7,692.6 332.8,691.8 334.8,690.5 336.9,689.0 338.9,687.5 341.0,687.0 343.0,687.4 345.1,688.5 347.1,689.4 349.2,690.2 351.2,690.8 353.3,691.5 355.3,692.9 357.4,694.7 359.4,696.7 361.4,698.4 363.5,699.6 365.5,700.7 367.6,701.6 369.6,702.6 371.7,703.7 373.7,705.0 375.8,706.3 377.8,707.8 379.9,711.3 381.9,715.8 384.0,720.7 386.0,724.9 388.1,728.6 390.1,732.1 392.2,734.7 394.2,736.2 396.3,736.9 398.3,737.0 400.4,736.5 402.4,735.6 404.5,734.2 406.5,732.6 408.6,730.9 410.6,728.6 412.6,725.7 414.7,722.5 416.7,718.8 418.8,714.9 420.8,711.1 422.9,707.5 424.9,703.7 427.0,699.9 429.0,696.4 431.1,692.8 433.1,689.3 435.2,685.5 437.2,681.4 439.3,677.5 441.3,674.2 443.4,671.6 445.4,669.8 447.5,668.5 449.5,667.8 451.6,667.6 453.6,667.7 455.7,668.0 457.7,668.2 459.8,668.2 461.8,667.9 463.8,668.1 465.9,668.6 467.9,668.8 470.0,669.1 472.0,669.3 474.1,668.9 476.1,667.8 478.2,665.9 480.2,664.1 482.3,662.8 484.3,662.5 486.4,662.4 488.4,663.1 490.5,664.8 492.5,667.1 494.6,670.1 496.6,673.6 498.7,677.4 500.7,681.3 502.8,684.9 504.8,688.0 506.9,690.8 508.9,693.2 511.0,694.9 513.0,695.9 515.0,696.5 517.1,696.1 519.1,694.6 521.2,692.7 523.2,690.5 525.3,688.9 527.3,687.2 529.4,685.5 531.4,683.4 533.5,680.7 535.5,677.7 537.6,674.4 539.6,670.9 541.7,667.6 543.7,664.9 545.8,662.7 547.8,660.5 549.9,658.4 551.9,656.3 554.0,654.1 556.0,651.4 558.1,648.7 560.1,646.5 562.2,644.5 564.2,643.0 566.2,641.7 568.3,641.1 570.3,640.8 572.4,641.0 574.4,641.6 576.5,643.0 578.5,644.6 580.6,646.5 582.6,648.9 584.7,651.4 586.7,653.8 588.8,656.2 590.8,658.6 592.9,660.7 594.9,662.5 597.0,664.6 599.0,666.7 601.1,668.8 603.1,670.8 605.2,672.5 607.2,673.8 609.3,674.8 611.3,675.1 613.4,675.0 615.4,673.8 617.4,672.1 619.5,670.2 621.5,668.4 623.6,667.8 625.6,669.6 627.7,672.6 629.7,676.0 631.8,679.5 633.8,683.0 635.9,686.2 637.9,689.9 640.0,692.9 642.0,695.1 644.1,696.3 646.1,696.7 648.2,696.0 650.2,694.5 652.3,692.7 654.3,690.6 656.4,688.4 658.4,686.6 660.5,685.1 662.5,683.9 664.6,682.8 666.6,682.0 668.6,681.7 670.7,680.6 672.7,679.0 674.8,676.9 676.8,674.6 678.9,672.0 680.9,669.2 683.0,666.2 685.0,663.5 687.1,660.2 689.1,656.0 691.2,651.8 693.2,647.8 695.3,644.7 697.3,642.2 699.4,640.2 701.4,638.3 703.5,636.5 705.5,635.1 707.6,634.3 709.6,634.4 711.7,635.2 713.7,636.2 715.8,637.9 717.8,640.1 719.8,643.3 721.9,646.9 723.9,651.1 726.0,655.6 728.0,660.3 730.1,665.1 732.1,669.8 734.2,673.5 736.2,676.7 738.3,680.8 740.3,685.2 742.4,689.5 744.4,693.6 746.5,697.6 748.5,701.2 750.6,704.4 752.6,707.0 754.7,709.3 756.7,711.5 758.8,713.8 760.8,715.7 762.9,717.3 764.9,718.4 767.0,718.9 769.0,719.0 771.0,718.3 773.1,716.9 775.1,716.3 777.2,716.5 779.2,717.0 781.3,717.4 783.3,717.6 785.4,717.6 787.4,717.7 789.5,718.7 791.5,720.6 793.6,722.9 795.6,724.6 797.7,725.8 799.7,726.1 801.8,725.8 803.8,725.3 805.9,723.9 807.9,722.4 810.0,720.8 812.0,719.3 814.1,717.7 816.1,716.0 818.2,714.2 820.2,711.7 822.2,708.8 824.3,705.2 826.3,701.9 828.4,698.5 830.4,695.2 832.5,691.8 834.5,688.1 836.6,684.5 838.6,681.2 840.7,678.0 842.7,674.9 844.8,671.6 846.8,668.6 848.9,666.1 850.9,663.8 853.0,662.0 855.0,660.5 857.1,658.9 859.1,658.3 861.2,657.7 863.2,657.2 865.3,656.6 867.3,655.9 869.4,654.9 871.4,653.6 873.4,652.0 875.5,650.5 877.5,649.0 879.6,647.3 881.6,646.9 883.7,647.2 885.7,647.7 887.8,648.5 889.8,650.0 891.9,652.1 893.9,654.4 896.0,656.7 898.0,658.7 900.1,660.4 902.1,661.6 904.2,662.0 906.2,662.2 908.3,662.2 910.3,662.1 912.4,661.9 914.4,661.8 916.5,662.0 918.5,662.3 920.6,662.4 922.6,662.3 924.6,662.1 926.7,662.0 928.7,661.7 930.8,661.7 932.8,662.6 934.9,664.1 936.9,666.0 939.0,667.9 941.0,669.4 943.1,670.7 945.1,671.7 947.2,672.2 949.2,672.4 951.3,672.5 953.3,672.3 955.4,671.6 957.4,670.6 959.5,669.2 961.5,667.8 963.6,666.5 965.6,665.3 967.7,664.3 969.7,664.0 971.8,663.6 973.8,663.1 975.8,662.6 977.9,662.4 979.9,662.2 982.0,662.0 984.0,661.7 986.1,661.3 988.1,660.4 990.2,659.3 992.2,658.2 994.3,656.9 996.3,655.6 998.4,654.2 1000.4,653.3 1002.5,652.8 1004.5,652.6 1006.6,652.9 1008.6,653.3 1010.7,653.7 1012.7,654.3 1014.8,655.2 1016.8,656.8 1018.9,658.4 1020.9,659.7 1023.0,660.7 1025.0,661.9 1027.0,663.1 1029.1,664.0 1031.1,664.6" fill="none" stroke="#0808a8" stroke-width="1.15" />
</g>
<path d="M1032.5 0.5H0.5V445.5H1032.5M1032.5 450.5H0.5V598.5H1032.5M1032.5 603.5H0.5V752.5" fill="none" stroke="#b2b2b2" stroke-width="1" shape-rendering="crispEdges"/>
<path d="M1032.5 0V446M1032.5 450V599M1032.5 603V753M0 752.5H1033" fill="none" stroke="#808080" stroke-width="1" shape-rendering="crispEdges"/>
<path d="M1033 34.5h2 M1033 67.5h2 M1033 101.5h2 M1033 134.5h2 M1033 168.5h2 M1033 201.5h2 M1033 234.5h2 M1033 268.5h2 M1033 301.5h2 M1033 335.5h2 M1033 368.5h2 M1033 401.5h2 M1033 435.5h2 M1033 479.5h2 M1033 509.5h2 M1033 539.5h2 M1033 568.5h2 M1033 611.5h2 M1033 629.5h2 M1033 647.5h2 M1033 665.5h2 M1033 683.5h2 M1033 701.5h2 M1033 718.5h2 M1033 736.5h2 M64.5 753v2 M162.5 753v2 M260.5 753v2 M359.5 753v2 M457.5 753v2 M555.5 753v2 M653.5 753v2 M752.5 753v2 M850.5 753v2 M948.5 753v2" stroke="#808080" stroke-width="1" fill="none" shape-rendering="crispEdges"/>
<g font-family="'DejaVu Sans',Verdana,sans-serif" font-size="11" fill="#000">
<text x="1038.5" y="39.0">9250.00</text>
<text x="1038.5" y="72.0">9125.00</text>
<text x="1038.5" y="106.0">9000.00</text>
<text x="1038.5" y="139.0">8875.00</text>
<text x="1038.5" y="173.0">8750.00</text>
<text x="1038.5" y="206.0">8625.00</text>
<text x="1038.5" y="239.0">8500.00</text>
<text x="1038.5" y="273.0">8375.00</text>
<text x="1038.5" y="306.0">8250.00</text>
<text x="1038.5" y="340.0">8125.00</text>
<text x="1038.5" y="373.0">8000.00</text>
<text x="1038.5" y="406.0">7875.00</text>
<text x="1038.5" y="484.0">80</text>
<text x="1038.5" y="514.0">60</text>
<text x="1038.5" y="544.0">40</text>
<text x="1038.5" y="573.0">20</text>
<text x="1038.5" y="616.0">100</text>
<text x="1038.5" y="634.0">75</text>
<text x="1038.5" y="652.0">50</text>
<text x="1038.5" y="670.0">25</text>
<text x="1038.5" y="688.0">0</text>
<text x="1038.5" y="706.0">-25</text>
<text x="1038.5" y="723.0">-50</text>
<text x="1038.5" y="741.0">-75</text>
<text x="64.3" y="767" text-anchor="middle" letter-spacing="0.4">Apr 13</text>
<text x="162.6" y="767" text-anchor="middle" letter-spacing="0.4">Apr 15</text>
<text x="260.8" y="767" text-anchor="middle" letter-spacing="0.4">Apr 17</text>
<text x="359.1" y="767" text-anchor="middle" letter-spacing="0.4">Apr 21</text>
<text x="457.3" y="767" text-anchor="middle" letter-spacing="0.4">Apr 23</text>
<text x="555.5" y="767" text-anchor="middle" letter-spacing="0.4">Apr 27</text>
<text x="653.8" y="767" text-anchor="middle" letter-spacing="0.4">Apr 29</text>
<text x="752.0" y="767" text-anchor="middle" letter-spacing="0.4">May 1</text>
<text x="850.3" y="767" text-anchor="middle" letter-spacing="0.4">May 5</text>
<text x="948.5" y="767" text-anchor="middle" letter-spacing="0.4">May 7</text>
</g>
<defs><linearGradient id="ig" x1="0" y1="0" x2="1" y2="1"><stop offset="0" stop-color="#3f78b8"/><stop offset="0.5" stop-color="#86b6e6"/><stop offset="1" stop-color="#b8e0ff"/></linearGradient></defs>
<rect x="10" y="1" width="183" height="15" fill="#fff"/>
<text x="15" y="12" font-family="'Liberation Sans',Arial,sans-serif" font-size="10" textLength="172.7" lengthAdjust="spacing" fill="#000" stroke="#000" stroke-width="0.12">L: 9222.50 CH: +114.75 CH%: 1.26%</text>
<g font-family="'DejaVu Sans',Verdana,sans-serif" font-size="9.3" fill="#000" lengthAdjust="spacingAndGlyphs">
<text x="9.9" y="462" font-weight="bold" textLength="17" lengthAdjust="spacingAndGlyphs">RSI</text>
<text x="65.7" y="462" textLength="20.6" lengthAdjust="spacingAndGlyphs">(14)</text>
<text x="9.5" y="615" font-weight="bold" textLength="29" lengthAdjust="spacingAndGlyphs">MACD</text>
<text x="54.6" y="615" textLength="118.4" lengthAdjust="spacingAndGlyphs">(12, 26, 9 - EMA, EMA)</text>
<text x="259.6" y="615" textLength="41.3" lengthAdjust="spacingAndGlyphs">SIGNAL</text>
<text x="341.5" y="615" textLength="32.1" lengthAdjust="spacingAndGlyphs">OSMA</text>
</g>
<path d="M44 458H61" stroke="#000066" stroke-width="2" shape-rendering="crispEdges"/>
<path d="M203 611H220" stroke="#4b827c" stroke-width="2" shape-rendering="crispEdges"/>
<path d="M238 611H255" stroke="#000080" stroke-width="2" shape-rendering="crispEdges"/>
<path d="M320 611H337" stroke="#c8608c" stroke-width="2" shape-rendering="crispEdges"/>
<g transform="translate(92.2,455.2)"><circle cx="4.3" cy="4.3" r="3.7" fill="url(#ig)"/><path d="M7.4 2.4A3.8 3.8 0 0 0 2.9 0.8L1.3 2.4A3.8 3.8 0 0 0 1.5 6.8" fill="none" stroke="#04142e" stroke-width="1.15"/><path d="M1.5 6.8A3.8 3.8 0 0 0 4.8 8.1" fill="none" stroke="#0a2246" stroke-width="1.1"/><path d="M1.0 1.0L4.2 3.9L3.6 0.4z" fill="#dcdcdc"/><path d="M1.6 2.3L4.1 3.9L3.2 1.3" fill="none" stroke="#0b2548" stroke-width="0.8"/></g>
<g transform="translate(178.8,608.2)"><circle cx="4.3" cy="4.3" r="3.7" fill="url(#ig)"/><path d="M7.4 2.4A3.8 3.8 0 0 0 2.9 0.8L1.3 2.4A3.8 3.8 0 0 0 1.5 6.8" fill="none" stroke="#04142e" stroke-width="1.15"/><path d="M1.5 6.8A3.8 3.8 0 0 0 4.8 8.1" fill="none" stroke="#0a2246" stroke-width="1.1"/><path d="M1.0 1.0L4.2 3.9L3.6 0.4z" fill="#dcdcdc"/><path d="M1.6 2.3L4.1 3.9L3.2 1.3" fill="none" stroke="#0b2548" stroke-width="0.8"/></g>
<rect x="224" y="608" width="8" height="8" fill="#f1f3ff"/><path d="M225.2 611.6L227.4 614.2L231 609.6" fill="none" stroke="#1466e0" stroke-width="1.9"/>
<rect x="306" y="608" width="8" height="8" fill="#f1f3ff"/><path d="M307.2 611.6L309.4 614.2L313 609.6" fill="none" stroke="#1466e0" stroke-width="1.9"/>
<rect x="379" y="608" width="8" height="8" fill="#f1f3ff"/><path d="M380.2 611.6L382.4 614.2L386 609.6" fill="none" stroke="#1466e0" stroke-width="1.9"/>
</svg>
</body></html>
